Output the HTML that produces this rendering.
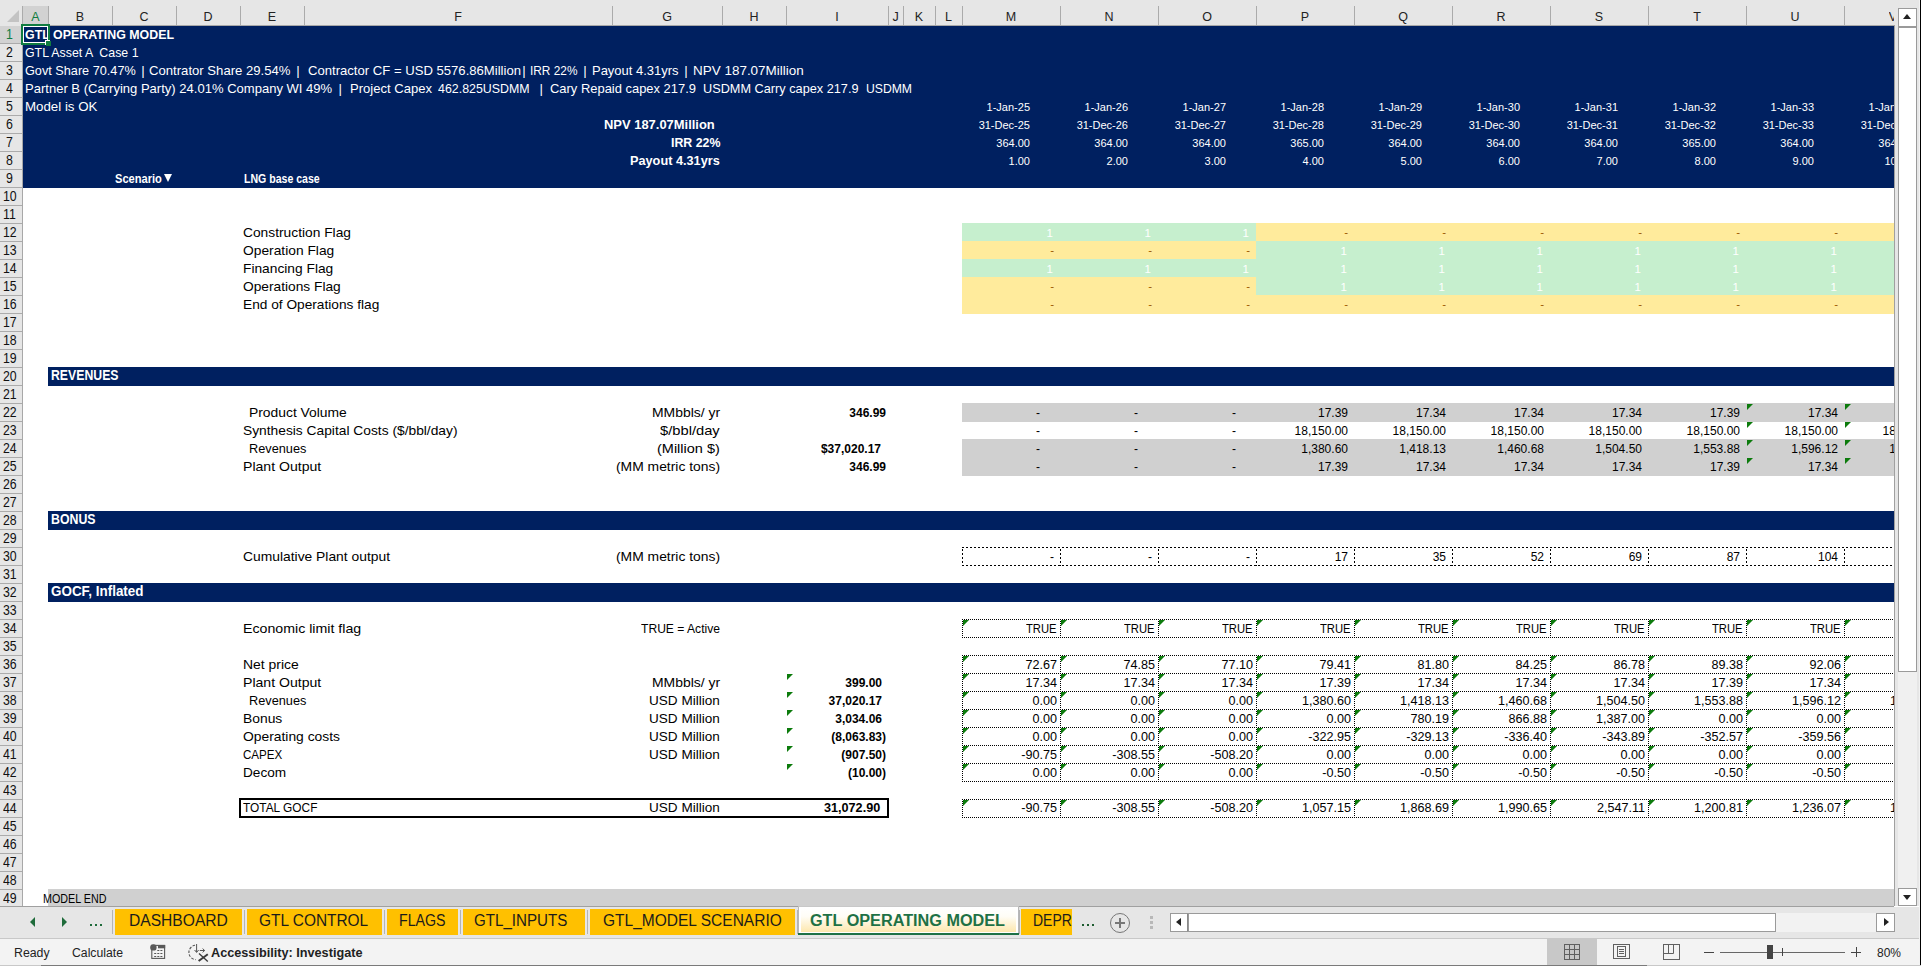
<!DOCTYPE html>
<html><head><meta charset="utf-8"><style>
html,body{margin:0;padding:0;}
body{width:1921px;height:966px;overflow:hidden;position:relative;background:#fff;font-family:"Liberation Sans",sans-serif;}
.t{position:absolute;white-space:pre;font-family:"Liberation Sans",sans-serif;}
</style></head><body>
<div style="position:absolute;left:0px;top:0px;width:1921px;height:966px;background:#ffffff;"></div>
<div style="position:absolute;left:23px;top:25px;width:1871px;height:163px;background:#002060;"></div>
<div style="position:absolute;left:48px;top:367px;width:1846px;height:19px;background:#002060;"></div>
<div style="position:absolute;left:48px;top:511px;width:1846px;height:19px;background:#002060;"></div>
<div style="position:absolute;left:48px;top:583px;width:1846px;height:19px;background:#002060;"></div>
<div style="position:absolute;left:962px;top:223px;width:98px;height:18px;background:#c6efce;"></div>
<div style="position:absolute;left:1060px;top:223px;width:98px;height:18px;background:#c6efce;"></div>
<div style="position:absolute;left:1158px;top:223px;width:98px;height:18px;background:#c6efce;"></div>
<div style="position:absolute;left:1256px;top:223px;width:98px;height:18px;background:#ffeb9c;"></div>
<div style="position:absolute;left:1354px;top:223px;width:98px;height:18px;background:#ffeb9c;"></div>
<div style="position:absolute;left:1452px;top:223px;width:98px;height:18px;background:#ffeb9c;"></div>
<div style="position:absolute;left:1550px;top:223px;width:98px;height:18px;background:#ffeb9c;"></div>
<div style="position:absolute;left:1648px;top:223px;width:98px;height:18px;background:#ffeb9c;"></div>
<div style="position:absolute;left:1746px;top:223px;width:98px;height:18px;background:#ffeb9c;"></div>
<div style="position:absolute;left:1844px;top:223px;width:50px;height:18px;background:#ffeb9c;"></div>
<div style="position:absolute;left:962px;top:241px;width:98px;height:18px;background:#ffeb9c;"></div>
<div style="position:absolute;left:1060px;top:241px;width:98px;height:18px;background:#ffeb9c;"></div>
<div style="position:absolute;left:1158px;top:241px;width:98px;height:18px;background:#ffeb9c;"></div>
<div style="position:absolute;left:1256px;top:241px;width:98px;height:18px;background:#c6efce;"></div>
<div style="position:absolute;left:1354px;top:241px;width:98px;height:18px;background:#c6efce;"></div>
<div style="position:absolute;left:1452px;top:241px;width:98px;height:18px;background:#c6efce;"></div>
<div style="position:absolute;left:1550px;top:241px;width:98px;height:18px;background:#c6efce;"></div>
<div style="position:absolute;left:1648px;top:241px;width:98px;height:18px;background:#c6efce;"></div>
<div style="position:absolute;left:1746px;top:241px;width:98px;height:18px;background:#c6efce;"></div>
<div style="position:absolute;left:1844px;top:241px;width:50px;height:18px;background:#c6efce;"></div>
<div style="position:absolute;left:962px;top:259px;width:98px;height:18px;background:#c6efce;"></div>
<div style="position:absolute;left:1060px;top:259px;width:98px;height:18px;background:#c6efce;"></div>
<div style="position:absolute;left:1158px;top:259px;width:98px;height:18px;background:#c6efce;"></div>
<div style="position:absolute;left:1256px;top:259px;width:98px;height:18px;background:#c6efce;"></div>
<div style="position:absolute;left:1354px;top:259px;width:98px;height:18px;background:#c6efce;"></div>
<div style="position:absolute;left:1452px;top:259px;width:98px;height:18px;background:#c6efce;"></div>
<div style="position:absolute;left:1550px;top:259px;width:98px;height:18px;background:#c6efce;"></div>
<div style="position:absolute;left:1648px;top:259px;width:98px;height:18px;background:#c6efce;"></div>
<div style="position:absolute;left:1746px;top:259px;width:98px;height:18px;background:#c6efce;"></div>
<div style="position:absolute;left:1844px;top:259px;width:50px;height:18px;background:#c6efce;"></div>
<div style="position:absolute;left:962px;top:277px;width:98px;height:18px;background:#ffeb9c;"></div>
<div style="position:absolute;left:1060px;top:277px;width:98px;height:18px;background:#ffeb9c;"></div>
<div style="position:absolute;left:1158px;top:277px;width:98px;height:18px;background:#ffeb9c;"></div>
<div style="position:absolute;left:1256px;top:277px;width:98px;height:18px;background:#c6efce;"></div>
<div style="position:absolute;left:1354px;top:277px;width:98px;height:18px;background:#c6efce;"></div>
<div style="position:absolute;left:1452px;top:277px;width:98px;height:18px;background:#c6efce;"></div>
<div style="position:absolute;left:1550px;top:277px;width:98px;height:18px;background:#c6efce;"></div>
<div style="position:absolute;left:1648px;top:277px;width:98px;height:18px;background:#c6efce;"></div>
<div style="position:absolute;left:1746px;top:277px;width:98px;height:18px;background:#c6efce;"></div>
<div style="position:absolute;left:1844px;top:277px;width:50px;height:18px;background:#c6efce;"></div>
<div style="position:absolute;left:962px;top:295px;width:98px;height:19px;background:#ffeb9c;"></div>
<div style="position:absolute;left:1060px;top:295px;width:98px;height:19px;background:#ffeb9c;"></div>
<div style="position:absolute;left:1158px;top:295px;width:98px;height:19px;background:#ffeb9c;"></div>
<div style="position:absolute;left:1256px;top:295px;width:98px;height:19px;background:#ffeb9c;"></div>
<div style="position:absolute;left:1354px;top:295px;width:98px;height:19px;background:#ffeb9c;"></div>
<div style="position:absolute;left:1452px;top:295px;width:98px;height:19px;background:#ffeb9c;"></div>
<div style="position:absolute;left:1550px;top:295px;width:98px;height:19px;background:#ffeb9c;"></div>
<div style="position:absolute;left:1648px;top:295px;width:98px;height:19px;background:#ffeb9c;"></div>
<div style="position:absolute;left:1746px;top:295px;width:98px;height:19px;background:#ffeb9c;"></div>
<div style="position:absolute;left:1844px;top:295px;width:50px;height:19px;background:#ffeb9c;"></div>
<div style="position:absolute;left:962px;top:403px;width:932px;height:19px;background:#d0d0d0;"></div>
<div style="position:absolute;left:962px;top:439px;width:932px;height:19px;background:#d0d0d0;"></div>
<div style="position:absolute;left:962px;top:457px;width:932px;height:19px;background:#d0d0d0;"></div>
<div style="position:absolute;left:48px;top:889px;width:1846px;height:17px;background:#d0d0d0;"></div>
<span class="t" style="left:25.00px;top:28px;font-size:13px;line-height:13px;font-weight:700;color:#ffffff;transform:scaleX(0.9536);transform-origin:0 0;">GTL OPERATING MODEL</span>
<span class="t" style="left:25.00px;top:46px;font-size:13.3px;line-height:13.3px;font-weight:400;color:#ffffff;transform:scaleX(0.9288);transform-origin:0 0;">GTL Asset A  Case 1</span>
<span class="t" style="left:25.00px;top:64px;font-size:13.3px;line-height:13.3px;font-weight:400;color:#ffffff;transform:scaleX(0.9542);transform-origin:0 0;">Govt Share 70.47%</span>
<span class="t" style="left:141.27px;top:64px;font-size:13.3px;line-height:13.3px;font-weight:400;color:#ffffff;">|</span>
<span class="t" style="left:149.25px;top:64px;font-size:13.3px;line-height:13.3px;font-weight:400;color:#ffffff;transform:scaleX(0.9867);transform-origin:0 0;">Contrator Share 29.54%</span>
<span class="t" style="left:296.27px;top:64px;font-size:13.3px;line-height:13.3px;font-weight:400;color:#ffffff;">|</span>
<span class="t" style="left:307.50px;top:64px;font-size:13.3px;line-height:13.3px;font-weight:400;color:#ffffff;transform:scaleX(0.9853);transform-origin:0 0;">Contractor CF = USD 5576.86Million</span>
<span class="t" style="left:522.27px;top:64px;font-size:13.3px;line-height:13.3px;font-weight:400;color:#ffffff;">|</span>
<span class="t" style="left:530.00px;top:64px;font-size:13.3px;line-height:13.3px;font-weight:400;color:#ffffff;transform:scaleX(0.8925);transform-origin:0 0;">IRR 22%</span>
<span class="t" style="left:583.27px;top:64px;font-size:13.3px;line-height:13.3px;font-weight:400;color:#ffffff;">|</span>
<span class="t" style="left:591.75px;top:64px;font-size:13.3px;line-height:13.3px;font-weight:400;color:#ffffff;transform:scaleX(0.9752);transform-origin:0 0;">Payout 4.31yrs</span>
<span class="t" style="left:684.27px;top:64px;font-size:13.3px;line-height:13.3px;font-weight:400;color:#ffffff;">|</span>
<span class="t" style="left:692.50px;top:64px;font-size:13.3px;line-height:13.3px;font-weight:400;color:#ffffff;transform:scaleX(1.0124);transform-origin:0 0;">NPV 187.07Million</span>
<span class="t" style="left:25.00px;top:82px;font-size:13.3px;line-height:13.3px;font-weight:400;color:#ffffff;transform:scaleX(0.9804);transform-origin:0 0;">Partner B (Carrying Party) 24.01% Company WI 49%</span>
<span class="t" style="left:338.47px;top:82px;font-size:13.3px;line-height:13.3px;font-weight:400;color:#ffffff;">|</span>
<span class="t" style="left:350.00px;top:82px;font-size:13.3px;line-height:13.3px;font-weight:400;color:#ffffff;transform:scaleX(0.9819);transform-origin:0 0;">Project Capex</span>
<span class="t" style="left:438.30px;top:82px;font-size:13.3px;line-height:13.3px;font-weight:400;color:#ffffff;transform:scaleX(0.9329);transform-origin:0 0;">462.825USDMM</span>
<span class="t" style="left:539.57px;top:82px;font-size:13.3px;line-height:13.3px;font-weight:400;color:#ffffff;">|</span>
<span class="t" style="left:550.00px;top:82px;font-size:13.3px;line-height:13.3px;font-weight:400;color:#ffffff;transform:scaleX(0.9729);transform-origin:0 0;">Cary Repaid capex 217.9</span>
<span class="t" style="left:703.25px;top:82px;font-size:13.3px;line-height:13.3px;font-weight:400;color:#ffffff;transform:scaleX(0.9565);transform-origin:0 0;">USDMM Carry capex 217.9</span>
<span class="t" style="left:865.75px;top:82px;font-size:13.3px;line-height:13.3px;font-weight:400;color:#ffffff;transform:scaleX(0.9157);transform-origin:0 0;">USDMM</span>
<span class="t" style="left:25.00px;top:100px;font-size:13.3px;line-height:13.3px;font-weight:400;color:#ffffff;">Model is OK</span>
<span class="t" style="left:604.25px;top:118px;font-size:13.5px;line-height:13.5px;font-weight:700;color:#ffffff;transform:scaleX(0.9585);transform-origin:0 0;">NPV 187.07Million</span>
<span class="t" style="left:670.50px;top:136px;font-size:13.5px;line-height:13.5px;font-weight:700;color:#ffffff;transform:scaleX(0.9161);transform-origin:0 0;">IRR 22%</span>
<span class="t" style="left:630.25px;top:154px;font-size:13.5px;line-height:13.5px;font-weight:700;color:#ffffff;transform:scaleX(0.9416);transform-origin:0 0;">Payout 4.31yrs</span>
<span class="t" style="left:115.00px;top:173px;font-size:12px;line-height:12px;font-weight:700;color:#ffffff;transform:scaleX(0.9250);transform-origin:0 0;">Scenario</span>
<div style="position:absolute;left:163.8px;top:174.2px;width:0;height:0;border-left:4.6px solid transparent;border-right:4.6px solid transparent;border-top:8.7px solid #fff"></div>
<span class="t" style="left:243.50px;top:173px;font-size:12px;line-height:12px;font-weight:700;color:#ffffff;transform:scaleX(0.8803);transform-origin:0 0;">LNG base case</span>
<span class="t" style="left:986.58px;top:102px;font-size:11px;line-height:11px;font-weight:400;color:#ffffff;">1-Jan-25</span>
<span class="t" style="left:978.64px;top:120px;font-size:11px;line-height:11px;font-weight:400;color:#ffffff;">31-Dec-25</span>
<span class="t" style="left:996.34px;top:138px;font-size:11px;line-height:11px;font-weight:400;color:#ffffff;">364.00</span>
<span class="t" style="left:1008.58px;top:156px;font-size:11px;line-height:11px;font-weight:400;color:#ffffff;">1.00</span>
<span class="t" style="left:1084.58px;top:102px;font-size:11px;line-height:11px;font-weight:400;color:#ffffff;">1-Jan-26</span>
<span class="t" style="left:1076.64px;top:120px;font-size:11px;line-height:11px;font-weight:400;color:#ffffff;">31-Dec-26</span>
<span class="t" style="left:1094.34px;top:138px;font-size:11px;line-height:11px;font-weight:400;color:#ffffff;">364.00</span>
<span class="t" style="left:1106.58px;top:156px;font-size:11px;line-height:11px;font-weight:400;color:#ffffff;">2.00</span>
<span class="t" style="left:1182.58px;top:102px;font-size:11px;line-height:11px;font-weight:400;color:#ffffff;">1-Jan-27</span>
<span class="t" style="left:1174.64px;top:120px;font-size:11px;line-height:11px;font-weight:400;color:#ffffff;">31-Dec-27</span>
<span class="t" style="left:1192.34px;top:138px;font-size:11px;line-height:11px;font-weight:400;color:#ffffff;">364.00</span>
<span class="t" style="left:1204.58px;top:156px;font-size:11px;line-height:11px;font-weight:400;color:#ffffff;">3.00</span>
<span class="t" style="left:1280.58px;top:102px;font-size:11px;line-height:11px;font-weight:400;color:#ffffff;">1-Jan-28</span>
<span class="t" style="left:1272.64px;top:120px;font-size:11px;line-height:11px;font-weight:400;color:#ffffff;">31-Dec-28</span>
<span class="t" style="left:1290.34px;top:138px;font-size:11px;line-height:11px;font-weight:400;color:#ffffff;">365.00</span>
<span class="t" style="left:1302.58px;top:156px;font-size:11px;line-height:11px;font-weight:400;color:#ffffff;">4.00</span>
<span class="t" style="left:1378.58px;top:102px;font-size:11px;line-height:11px;font-weight:400;color:#ffffff;">1-Jan-29</span>
<span class="t" style="left:1370.64px;top:120px;font-size:11px;line-height:11px;font-weight:400;color:#ffffff;">31-Dec-29</span>
<span class="t" style="left:1388.34px;top:138px;font-size:11px;line-height:11px;font-weight:400;color:#ffffff;">364.00</span>
<span class="t" style="left:1400.58px;top:156px;font-size:11px;line-height:11px;font-weight:400;color:#ffffff;">5.00</span>
<span class="t" style="left:1476.58px;top:102px;font-size:11px;line-height:11px;font-weight:400;color:#ffffff;">1-Jan-30</span>
<span class="t" style="left:1468.64px;top:120px;font-size:11px;line-height:11px;font-weight:400;color:#ffffff;">31-Dec-30</span>
<span class="t" style="left:1486.34px;top:138px;font-size:11px;line-height:11px;font-weight:400;color:#ffffff;">364.00</span>
<span class="t" style="left:1498.58px;top:156px;font-size:11px;line-height:11px;font-weight:400;color:#ffffff;">6.00</span>
<span class="t" style="left:1574.58px;top:102px;font-size:11px;line-height:11px;font-weight:400;color:#ffffff;">1-Jan-31</span>
<span class="t" style="left:1566.64px;top:120px;font-size:11px;line-height:11px;font-weight:400;color:#ffffff;">31-Dec-31</span>
<span class="t" style="left:1584.34px;top:138px;font-size:11px;line-height:11px;font-weight:400;color:#ffffff;">364.00</span>
<span class="t" style="left:1596.58px;top:156px;font-size:11px;line-height:11px;font-weight:400;color:#ffffff;">7.00</span>
<span class="t" style="left:1672.58px;top:102px;font-size:11px;line-height:11px;font-weight:400;color:#ffffff;">1-Jan-32</span>
<span class="t" style="left:1664.64px;top:120px;font-size:11px;line-height:11px;font-weight:400;color:#ffffff;">31-Dec-32</span>
<span class="t" style="left:1682.34px;top:138px;font-size:11px;line-height:11px;font-weight:400;color:#ffffff;">365.00</span>
<span class="t" style="left:1694.58px;top:156px;font-size:11px;line-height:11px;font-weight:400;color:#ffffff;">8.00</span>
<span class="t" style="left:1770.58px;top:102px;font-size:11px;line-height:11px;font-weight:400;color:#ffffff;">1-Jan-33</span>
<span class="t" style="left:1762.64px;top:120px;font-size:11px;line-height:11px;font-weight:400;color:#ffffff;">31-Dec-33</span>
<span class="t" style="left:1780.34px;top:138px;font-size:11px;line-height:11px;font-weight:400;color:#ffffff;">364.00</span>
<span class="t" style="left:1792.58px;top:156px;font-size:11px;line-height:11px;font-weight:400;color:#ffffff;">9.00</span>
<div style="position:absolute;left:1868.58px;top:100px;width:25.42px;height:19px;overflow:hidden"><span class="t" style="left:0;top:2px;font-size:11px;line-height:11px;font-weight:400;color:#ffffff;">1-Jan-34</span></div>
<div style="position:absolute;left:1860.64px;top:118px;width:33.36px;height:19px;overflow:hidden"><span class="t" style="left:0;top:2px;font-size:11px;line-height:11px;font-weight:400;color:#ffffff;">31-Dec-34</span></div>
<div style="position:absolute;left:1878.34px;top:136px;width:15.66px;height:19px;overflow:hidden"><span class="t" style="left:0;top:2px;font-size:11px;line-height:11px;font-weight:400;color:#ffffff;">364.00</span></div>
<div style="position:absolute;left:1884.47px;top:154px;width:9.53px;height:19px;overflow:hidden"><span class="t" style="left:0;top:2px;font-size:11px;line-height:11px;font-weight:400;color:#ffffff;">10.00</span></div>
<span class="t" style="left:243.00px;top:226px;font-size:13.5px;line-height:13.5px;font-weight:400;color:#000000;transform:scaleX(1.0207);transform-origin:0 0;">Construction Flag</span>
<span class="t" style="left:243.00px;top:244px;font-size:13.5px;line-height:13.5px;font-weight:400;color:#000000;transform:scaleX(1.0217);transform-origin:0 0;">Operation Flag</span>
<span class="t" style="left:243.00px;top:262px;font-size:13.5px;line-height:13.5px;font-weight:400;color:#000000;transform:scaleX(1.0191);transform-origin:0 0;">Financing Flag</span>
<span class="t" style="left:243.00px;top:280px;font-size:13.5px;line-height:13.5px;font-weight:400;color:#000000;transform:scaleX(1.0176);transform-origin:0 0;">Operations Flag</span>
<span class="t" style="left:243.00px;top:298px;font-size:13.5px;line-height:13.5px;font-weight:400;color:#000000;transform:scaleX(1.0142);transform-origin:0 0;">End of Operations flag</span>
<span class="t" style="left:249.00px;top:406px;font-size:13.5px;line-height:13.5px;font-weight:400;color:#000000;transform:scaleX(1.0261);transform-origin:0 0;">Product Volume</span>
<span class="t" style="left:243.00px;top:424px;font-size:13.5px;line-height:13.5px;font-weight:400;color:#000000;transform:scaleX(1.0210);transform-origin:0 0;">Synthesis Capital Costs ($/bbl/day)</span>
<span class="t" style="left:249.00px;top:442px;font-size:13.5px;line-height:13.5px;font-weight:400;color:#000000;transform:scaleX(0.9441);transform-origin:0 0;">Revenues</span>
<span class="t" style="left:243.00px;top:460px;font-size:13.5px;line-height:13.5px;font-weight:400;color:#000000;transform:scaleX(1.0418);transform-origin:0 0;">Plant Output</span>
<span class="t" style="left:243.00px;top:550px;font-size:13.5px;line-height:13.5px;font-weight:400;color:#000000;transform:scaleX(1.0255);transform-origin:0 0;">Cumulative Plant output</span>
<span class="t" style="left:243.00px;top:622px;font-size:13.5px;line-height:13.5px;font-weight:400;color:#000000;transform:scaleX(1.0507);transform-origin:0 0;">Economic limit flag</span>
<span class="t" style="left:243.00px;top:658px;font-size:13.5px;line-height:13.5px;font-weight:400;color:#000000;transform:scaleX(1.0327);transform-origin:0 0;">Net price</span>
<span class="t" style="left:243.00px;top:676px;font-size:13.5px;line-height:13.5px;font-weight:400;color:#000000;transform:scaleX(1.0418);transform-origin:0 0;">Plant Output</span>
<span class="t" style="left:249.00px;top:694px;font-size:13.5px;line-height:13.5px;font-weight:400;color:#000000;transform:scaleX(0.9441);transform-origin:0 0;">Revenues</span>
<span class="t" style="left:243.00px;top:712px;font-size:13.5px;line-height:13.5px;font-weight:400;color:#000000;transform:scaleX(1.0266);transform-origin:0 0;">Bonus</span>
<span class="t" style="left:243.00px;top:730px;font-size:13.5px;line-height:13.5px;font-weight:400;color:#000000;transform:scaleX(1.0259);transform-origin:0 0;">Operating costs</span>
<span class="t" style="left:243.00px;top:748px;font-size:13.5px;line-height:13.5px;font-weight:400;color:#000000;transform:scaleX(0.8584);transform-origin:0 0;">CAPEX</span>
<span class="t" style="left:243.00px;top:766px;font-size:13.5px;line-height:13.5px;font-weight:400;color:#000000;transform:scaleX(1.0078);transform-origin:0 0;">Decom</span>
<span class="t" style="left:243.00px;top:801px;font-size:13.5px;line-height:13.5px;font-weight:400;color:#000000;transform:scaleX(0.8803);transform-origin:0 0;">TOTAL GOCF</span>
<span class="t" style="left:651.80px;top:406px;font-size:13.5px;line-height:13.5px;font-weight:400;color:#000000;transform:scaleX(1.0331);transform-origin:0 0;">MMbbls/ yr</span>
<span class="t" style="left:660.30px;top:424px;font-size:13.5px;line-height:13.5px;font-weight:400;color:#000000;transform:scaleX(1.0895);transform-origin:0 0;">$/bbl/day</span>
<span class="t" style="left:657.20px;top:442px;font-size:13.5px;line-height:13.5px;font-weight:400;color:#000000;transform:scaleX(1.0732);transform-origin:0 0;">(Million $)</span>
<span class="t" style="left:616.00px;top:460px;font-size:13.5px;line-height:13.5px;font-weight:400;color:#000000;transform:scaleX(1.0272);transform-origin:0 0;">(MM metric tons)</span>
<span class="t" style="left:616.00px;top:550px;font-size:13.5px;line-height:13.5px;font-weight:400;color:#000000;transform:scaleX(1.0272);transform-origin:0 0;">(MM metric tons)</span>
<span class="t" style="left:641.00px;top:622px;font-size:13.5px;line-height:13.5px;font-weight:400;color:#000000;transform:scaleX(0.8961);transform-origin:0 0;">TRUE = Active</span>
<span class="t" style="left:651.80px;top:676px;font-size:13.5px;line-height:13.5px;font-weight:400;color:#000000;transform:scaleX(1.0331);transform-origin:0 0;">MMbbls/ yr</span>
<span class="t" style="left:649.20px;top:694px;font-size:13.5px;line-height:13.5px;font-weight:400;color:#000000;transform:scaleX(1.0040);transform-origin:0 0;">USD Million</span>
<span class="t" style="left:649.20px;top:712px;font-size:13.5px;line-height:13.5px;font-weight:400;color:#000000;transform:scaleX(1.0040);transform-origin:0 0;">USD Million</span>
<span class="t" style="left:649.20px;top:730px;font-size:13.5px;line-height:13.5px;font-weight:400;color:#000000;transform:scaleX(1.0040);transform-origin:0 0;">USD Million</span>
<span class="t" style="left:649.20px;top:748px;font-size:13.5px;line-height:13.5px;font-weight:400;color:#000000;transform:scaleX(1.0040);transform-origin:0 0;">USD Million</span>
<span class="t" style="left:649.20px;top:801px;font-size:13.5px;line-height:13.5px;font-weight:400;color:#000000;transform:scaleX(1.0040);transform-origin:0 0;">USD Million</span>
<span class="t" style="left:51.00px;top:368px;font-size:14px;line-height:14px;font-weight:700;color:#ffffff;transform:scaleX(0.8763);transform-origin:0 0;">REVENUES</span>
<span class="t" style="left:51.00px;top:512px;font-size:14px;line-height:14px;font-weight:700;color:#ffffff;transform:scaleX(0.8801);transform-origin:0 0;">BONUS</span>
<span class="t" style="left:51.00px;top:584px;font-size:14px;line-height:14px;font-weight:700;color:#ffffff;transform:scaleX(0.9590);transform-origin:0 0;">GOCF, Inflated</span>
<span class="t" style="left:849.30px;top:407px;font-size:12px;line-height:12px;font-weight:700;color:#000;">346.99</span>
<span class="t" style="left:820.94px;top:443px;font-size:12px;line-height:12px;font-weight:700;color:#000;">$37,020.17</span>
<span class="t" style="left:849.30px;top:461px;font-size:12px;line-height:12px;font-weight:700;color:#000;">346.99</span>
<span class="t" style="left:845.30px;top:677px;font-size:12px;line-height:12px;font-weight:700;color:#000;">399.00</span>
<span class="t" style="left:828.61px;top:695px;font-size:12px;line-height:12px;font-weight:700;color:#000;">37,020.17</span>
<span class="t" style="left:835.28px;top:713px;font-size:12px;line-height:12px;font-weight:700;color:#000;">3,034.06</span>
<span class="t" style="left:831.30px;top:731px;font-size:12px;line-height:12px;font-weight:700;color:#000;">(8,063.83)</span>
<span class="t" style="left:841.30px;top:749px;font-size:12px;line-height:12px;font-weight:700;color:#000;">(907.50)</span>
<span class="t" style="left:847.97px;top:767px;font-size:12px;line-height:12px;font-weight:700;color:#000;">(10.00)</span>
<span class="t" style="left:824.00px;top:801px;font-size:13px;line-height:13px;font-weight:700;color:#000;transform:scaleX(0.9716);transform-origin:0 0;">31,072.90</span>
<div style="position:absolute;left:787px;top:674px;width:0;height:0;border-top:6px solid #0c7b0c;border-right:6px solid transparent"></div>
<div style="position:absolute;left:787px;top:692px;width:0;height:0;border-top:6px solid #0c7b0c;border-right:6px solid transparent"></div>
<div style="position:absolute;left:787px;top:710px;width:0;height:0;border-top:6px solid #0c7b0c;border-right:6px solid transparent"></div>
<div style="position:absolute;left:787px;top:728px;width:0;height:0;border-top:6px solid #0c7b0c;border-right:6px solid transparent"></div>
<div style="position:absolute;left:787px;top:746px;width:0;height:0;border-top:6px solid #0c7b0c;border-right:6px solid transparent"></div>
<div style="position:absolute;left:787px;top:764px;width:0;height:0;border-top:6px solid #0c7b0c;border-right:6px solid transparent"></div>
<span class="t" style="left:1046.59px;top:228px;font-size:11.5px;line-height:11.5px;font-weight:400;color:#ffffff;">1</span>
<span class="t" style="left:1144.59px;top:228px;font-size:11.5px;line-height:11.5px;font-weight:400;color:#ffffff;">1</span>
<span class="t" style="left:1242.59px;top:228px;font-size:11.5px;line-height:11.5px;font-weight:400;color:#ffffff;">1</span>
<span class="t" style="left:1344.16px;top:227px;font-size:11.5px;line-height:11.5px;font-weight:400;color:#9c5700;">-</span>
<span class="t" style="left:1442.16px;top:227px;font-size:11.5px;line-height:11.5px;font-weight:400;color:#9c5700;">-</span>
<span class="t" style="left:1540.16px;top:227px;font-size:11.5px;line-height:11.5px;font-weight:400;color:#9c5700;">-</span>
<span class="t" style="left:1638.16px;top:227px;font-size:11.5px;line-height:11.5px;font-weight:400;color:#9c5700;">-</span>
<span class="t" style="left:1736.16px;top:227px;font-size:11.5px;line-height:11.5px;font-weight:400;color:#9c5700;">-</span>
<span class="t" style="left:1834.16px;top:227px;font-size:11.5px;line-height:11.5px;font-weight:400;color:#9c5700;">-</span>
<div style="position:absolute;left:1932.16px;top:225px;width:0.00px;height:19px;overflow:hidden"><span class="t" style="left:0;top:2px;font-size:11.5px;line-height:11.5px;font-weight:400;color:#9c5700;">-</span></div>
<span class="t" style="left:1050.16px;top:245px;font-size:11.5px;line-height:11.5px;font-weight:400;color:#9c5700;">-</span>
<span class="t" style="left:1148.16px;top:245px;font-size:11.5px;line-height:11.5px;font-weight:400;color:#9c5700;">-</span>
<span class="t" style="left:1246.16px;top:245px;font-size:11.5px;line-height:11.5px;font-weight:400;color:#9c5700;">-</span>
<span class="t" style="left:1340.59px;top:246px;font-size:11.5px;line-height:11.5px;font-weight:400;color:#ffffff;">1</span>
<span class="t" style="left:1438.59px;top:246px;font-size:11.5px;line-height:11.5px;font-weight:400;color:#ffffff;">1</span>
<span class="t" style="left:1536.59px;top:246px;font-size:11.5px;line-height:11.5px;font-weight:400;color:#ffffff;">1</span>
<span class="t" style="left:1634.59px;top:246px;font-size:11.5px;line-height:11.5px;font-weight:400;color:#ffffff;">1</span>
<span class="t" style="left:1732.59px;top:246px;font-size:11.5px;line-height:11.5px;font-weight:400;color:#ffffff;">1</span>
<span class="t" style="left:1830.59px;top:246px;font-size:11.5px;line-height:11.5px;font-weight:400;color:#ffffff;">1</span>
<div style="position:absolute;left:1928.59px;top:244px;width:0.00px;height:19px;overflow:hidden"><span class="t" style="left:0;top:2px;font-size:11.5px;line-height:11.5px;font-weight:400;color:#ffffff;">1</span></div>
<span class="t" style="left:1046.59px;top:264px;font-size:11.5px;line-height:11.5px;font-weight:400;color:#ffffff;">1</span>
<span class="t" style="left:1144.59px;top:264px;font-size:11.5px;line-height:11.5px;font-weight:400;color:#ffffff;">1</span>
<span class="t" style="left:1242.59px;top:264px;font-size:11.5px;line-height:11.5px;font-weight:400;color:#ffffff;">1</span>
<span class="t" style="left:1340.59px;top:264px;font-size:11.5px;line-height:11.5px;font-weight:400;color:#ffffff;">1</span>
<span class="t" style="left:1438.59px;top:264px;font-size:11.5px;line-height:11.5px;font-weight:400;color:#ffffff;">1</span>
<span class="t" style="left:1536.59px;top:264px;font-size:11.5px;line-height:11.5px;font-weight:400;color:#ffffff;">1</span>
<span class="t" style="left:1634.59px;top:264px;font-size:11.5px;line-height:11.5px;font-weight:400;color:#ffffff;">1</span>
<span class="t" style="left:1732.59px;top:264px;font-size:11.5px;line-height:11.5px;font-weight:400;color:#ffffff;">1</span>
<span class="t" style="left:1830.59px;top:264px;font-size:11.5px;line-height:11.5px;font-weight:400;color:#ffffff;">1</span>
<div style="position:absolute;left:1928.59px;top:262px;width:0.00px;height:19px;overflow:hidden"><span class="t" style="left:0;top:2px;font-size:11.5px;line-height:11.5px;font-weight:400;color:#ffffff;">1</span></div>
<span class="t" style="left:1050.16px;top:281px;font-size:11.5px;line-height:11.5px;font-weight:400;color:#9c5700;">-</span>
<span class="t" style="left:1148.16px;top:281px;font-size:11.5px;line-height:11.5px;font-weight:400;color:#9c5700;">-</span>
<span class="t" style="left:1246.16px;top:281px;font-size:11.5px;line-height:11.5px;font-weight:400;color:#9c5700;">-</span>
<span class="t" style="left:1340.59px;top:282px;font-size:11.5px;line-height:11.5px;font-weight:400;color:#ffffff;">1</span>
<span class="t" style="left:1438.59px;top:282px;font-size:11.5px;line-height:11.5px;font-weight:400;color:#ffffff;">1</span>
<span class="t" style="left:1536.59px;top:282px;font-size:11.5px;line-height:11.5px;font-weight:400;color:#ffffff;">1</span>
<span class="t" style="left:1634.59px;top:282px;font-size:11.5px;line-height:11.5px;font-weight:400;color:#ffffff;">1</span>
<span class="t" style="left:1732.59px;top:282px;font-size:11.5px;line-height:11.5px;font-weight:400;color:#ffffff;">1</span>
<span class="t" style="left:1830.59px;top:282px;font-size:11.5px;line-height:11.5px;font-weight:400;color:#ffffff;">1</span>
<div style="position:absolute;left:1928.59px;top:280px;width:0.00px;height:19px;overflow:hidden"><span class="t" style="left:0;top:2px;font-size:11.5px;line-height:11.5px;font-weight:400;color:#ffffff;">1</span></div>
<span class="t" style="left:1050.16px;top:299px;font-size:11.5px;line-height:11.5px;font-weight:400;color:#9c5700;">-</span>
<span class="t" style="left:1148.16px;top:299px;font-size:11.5px;line-height:11.5px;font-weight:400;color:#9c5700;">-</span>
<span class="t" style="left:1246.16px;top:299px;font-size:11.5px;line-height:11.5px;font-weight:400;color:#9c5700;">-</span>
<span class="t" style="left:1344.16px;top:299px;font-size:11.5px;line-height:11.5px;font-weight:400;color:#9c5700;">-</span>
<span class="t" style="left:1442.16px;top:299px;font-size:11.5px;line-height:11.5px;font-weight:400;color:#9c5700;">-</span>
<span class="t" style="left:1540.16px;top:299px;font-size:11.5px;line-height:11.5px;font-weight:400;color:#9c5700;">-</span>
<span class="t" style="left:1638.16px;top:299px;font-size:11.5px;line-height:11.5px;font-weight:400;color:#9c5700;">-</span>
<span class="t" style="left:1736.16px;top:299px;font-size:11.5px;line-height:11.5px;font-weight:400;color:#9c5700;">-</span>
<span class="t" style="left:1834.16px;top:299px;font-size:11.5px;line-height:11.5px;font-weight:400;color:#9c5700;">-</span>
<div style="position:absolute;left:1932.16px;top:297px;width:0.00px;height:19px;overflow:hidden"><span class="t" style="left:0;top:2px;font-size:11.5px;line-height:11.5px;font-weight:400;color:#9c5700;">-</span></div>
<span class="t" style="left:1036.00px;top:407px;font-size:12px;line-height:12px;font-weight:400;color:#000;">-</span>
<span class="t" style="left:1134.00px;top:407px;font-size:12px;line-height:12px;font-weight:400;color:#000;">-</span>
<span class="t" style="left:1232.00px;top:407px;font-size:12px;line-height:12px;font-weight:400;color:#000;">-</span>
<span class="t" style="left:1317.97px;top:407px;font-size:12px;line-height:12px;font-weight:400;color:#000;">17.39</span>
<span class="t" style="left:1415.97px;top:407px;font-size:12px;line-height:12px;font-weight:400;color:#000;">17.34</span>
<span class="t" style="left:1513.97px;top:407px;font-size:12px;line-height:12px;font-weight:400;color:#000;">17.34</span>
<span class="t" style="left:1611.97px;top:407px;font-size:12px;line-height:12px;font-weight:400;color:#000;">17.34</span>
<span class="t" style="left:1709.97px;top:407px;font-size:12px;line-height:12px;font-weight:400;color:#000;">17.39</span>
<span class="t" style="left:1807.97px;top:407px;font-size:12px;line-height:12px;font-weight:400;color:#000;">17.34</span>
<div style="position:absolute;left:1905.97px;top:405px;width:0.00px;height:20px;overflow:hidden"><span class="t" style="left:0;top:2px;font-size:12px;line-height:12px;font-weight:400;color:#000;">17.34</span></div>
<span class="t" style="left:1036.00px;top:425px;font-size:12px;line-height:12px;font-weight:400;color:#000;">-</span>
<span class="t" style="left:1134.00px;top:425px;font-size:12px;line-height:12px;font-weight:400;color:#000;">-</span>
<span class="t" style="left:1232.00px;top:425px;font-size:12px;line-height:12px;font-weight:400;color:#000;">-</span>
<span class="t" style="left:1294.61px;top:425px;font-size:12px;line-height:12px;font-weight:400;color:#000;">18,150.00</span>
<span class="t" style="left:1392.61px;top:425px;font-size:12px;line-height:12px;font-weight:400;color:#000;">18,150.00</span>
<span class="t" style="left:1490.61px;top:425px;font-size:12px;line-height:12px;font-weight:400;color:#000;">18,150.00</span>
<span class="t" style="left:1588.61px;top:425px;font-size:12px;line-height:12px;font-weight:400;color:#000;">18,150.00</span>
<span class="t" style="left:1686.61px;top:425px;font-size:12px;line-height:12px;font-weight:400;color:#000;">18,150.00</span>
<span class="t" style="left:1784.61px;top:425px;font-size:12px;line-height:12px;font-weight:400;color:#000;">18,150.00</span>
<div style="position:absolute;left:1882.61px;top:423px;width:11.39px;height:20px;overflow:hidden"><span class="t" style="left:0;top:2px;font-size:12px;line-height:12px;font-weight:400;color:#000;">18,150.00</span></div>
<span class="t" style="left:1036.00px;top:443px;font-size:12px;line-height:12px;font-weight:400;color:#000;">-</span>
<span class="t" style="left:1134.00px;top:443px;font-size:12px;line-height:12px;font-weight:400;color:#000;">-</span>
<span class="t" style="left:1232.00px;top:443px;font-size:12px;line-height:12px;font-weight:400;color:#000;">-</span>
<span class="t" style="left:1301.28px;top:443px;font-size:12px;line-height:12px;font-weight:400;color:#000;">1,380.60</span>
<span class="t" style="left:1399.28px;top:443px;font-size:12px;line-height:12px;font-weight:400;color:#000;">1,418.13</span>
<span class="t" style="left:1497.28px;top:443px;font-size:12px;line-height:12px;font-weight:400;color:#000;">1,460.68</span>
<span class="t" style="left:1595.28px;top:443px;font-size:12px;line-height:12px;font-weight:400;color:#000;">1,504.50</span>
<span class="t" style="left:1693.28px;top:443px;font-size:12px;line-height:12px;font-weight:400;color:#000;">1,553.88</span>
<span class="t" style="left:1791.28px;top:443px;font-size:12px;line-height:12px;font-weight:400;color:#000;">1,596.12</span>
<div style="position:absolute;left:1889.28px;top:441px;width:4.72px;height:20px;overflow:hidden"><span class="t" style="left:0;top:2px;font-size:12px;line-height:12px;font-weight:400;color:#000;">1,640.23</span></div>
<span class="t" style="left:1036.00px;top:461px;font-size:12px;line-height:12px;font-weight:400;color:#000;">-</span>
<span class="t" style="left:1134.00px;top:461px;font-size:12px;line-height:12px;font-weight:400;color:#000;">-</span>
<span class="t" style="left:1232.00px;top:461px;font-size:12px;line-height:12px;font-weight:400;color:#000;">-</span>
<span class="t" style="left:1317.97px;top:461px;font-size:12px;line-height:12px;font-weight:400;color:#000;">17.39</span>
<span class="t" style="left:1415.97px;top:461px;font-size:12px;line-height:12px;font-weight:400;color:#000;">17.34</span>
<span class="t" style="left:1513.97px;top:461px;font-size:12px;line-height:12px;font-weight:400;color:#000;">17.34</span>
<span class="t" style="left:1611.97px;top:461px;font-size:12px;line-height:12px;font-weight:400;color:#000;">17.34</span>
<span class="t" style="left:1709.97px;top:461px;font-size:12px;line-height:12px;font-weight:400;color:#000;">17.39</span>
<span class="t" style="left:1807.97px;top:461px;font-size:12px;line-height:12px;font-weight:400;color:#000;">17.34</span>
<div style="position:absolute;left:1905.97px;top:459px;width:0.00px;height:20px;overflow:hidden"><span class="t" style="left:0;top:2px;font-size:12px;line-height:12px;font-weight:400;color:#000;">17.34</span></div>
<div style="position:absolute;left:1747px;top:404px;width:0;height:0;border-top:6px solid #0c7b0c;border-right:6px solid transparent"></div>
<div style="position:absolute;left:1845px;top:404px;width:0;height:0;border-top:6px solid #0c7b0c;border-right:6px solid transparent"></div>
<div style="position:absolute;left:1747px;top:422px;width:0;height:0;border-top:6px solid #0c7b0c;border-right:6px solid transparent"></div>
<div style="position:absolute;left:1845px;top:422px;width:0;height:0;border-top:6px solid #0c7b0c;border-right:6px solid transparent"></div>
<div style="position:absolute;left:1747px;top:440px;width:0;height:0;border-top:6px solid #0c7b0c;border-right:6px solid transparent"></div>
<div style="position:absolute;left:1845px;top:440px;width:0;height:0;border-top:6px solid #0c7b0c;border-right:6px solid transparent"></div>
<div style="position:absolute;left:1747px;top:458px;width:0;height:0;border-top:6px solid #0c7b0c;border-right:6px solid transparent"></div>
<div style="position:absolute;left:1845px;top:458px;width:0;height:0;border-top:6px solid #0c7b0c;border-right:6px solid transparent"></div>
<div style="position:absolute;left:962px;top:547px;width:932px;height:1px;background:repeating-linear-gradient(90deg,#000 0 2px,transparent 2px 4px)"></div>
<div style="position:absolute;left:962px;top:565px;width:932px;height:1px;background:repeating-linear-gradient(90deg,#000 0 2px,transparent 2px 4px)"></div>
<div style="position:absolute;left:962px;top:549px;width:1px;height:17px;background:repeating-linear-gradient(180deg,#000 0 2px,transparent 2px 4px)"></div>
<div style="position:absolute;left:1060px;top:549px;width:1px;height:17px;background:repeating-linear-gradient(180deg,#000 0 2px,transparent 2px 4px)"></div>
<div style="position:absolute;left:1158px;top:549px;width:1px;height:17px;background:repeating-linear-gradient(180deg,#000 0 2px,transparent 2px 4px)"></div>
<div style="position:absolute;left:1256px;top:549px;width:1px;height:17px;background:repeating-linear-gradient(180deg,#000 0 2px,transparent 2px 4px)"></div>
<div style="position:absolute;left:1354px;top:549px;width:1px;height:17px;background:repeating-linear-gradient(180deg,#000 0 2px,transparent 2px 4px)"></div>
<div style="position:absolute;left:1452px;top:549px;width:1px;height:17px;background:repeating-linear-gradient(180deg,#000 0 2px,transparent 2px 4px)"></div>
<div style="position:absolute;left:1550px;top:549px;width:1px;height:17px;background:repeating-linear-gradient(180deg,#000 0 2px,transparent 2px 4px)"></div>
<div style="position:absolute;left:1648px;top:549px;width:1px;height:17px;background:repeating-linear-gradient(180deg,#000 0 2px,transparent 2px 4px)"></div>
<div style="position:absolute;left:1746px;top:549px;width:1px;height:17px;background:repeating-linear-gradient(180deg,#000 0 2px,transparent 2px 4px)"></div>
<div style="position:absolute;left:1844px;top:549px;width:1px;height:17px;background:repeating-linear-gradient(180deg,#000 0 2px,transparent 2px 4px)"></div>
<span class="t" style="left:1050.00px;top:551px;font-size:12px;line-height:12px;font-weight:400;color:#000;">-</span>
<span class="t" style="left:1148.00px;top:551px;font-size:12px;line-height:12px;font-weight:400;color:#000;">-</span>
<span class="t" style="left:1246.00px;top:551px;font-size:12px;line-height:12px;font-weight:400;color:#000;">-</span>
<span class="t" style="left:1334.64px;top:551px;font-size:12px;line-height:12px;font-weight:400;color:#000;">17</span>
<span class="t" style="left:1432.64px;top:551px;font-size:12px;line-height:12px;font-weight:400;color:#000;">35</span>
<span class="t" style="left:1530.64px;top:551px;font-size:12px;line-height:12px;font-weight:400;color:#000;">52</span>
<span class="t" style="left:1628.64px;top:551px;font-size:12px;line-height:12px;font-weight:400;color:#000;">69</span>
<span class="t" style="left:1726.64px;top:551px;font-size:12px;line-height:12px;font-weight:400;color:#000;">87</span>
<span class="t" style="left:1817.97px;top:551px;font-size:12px;line-height:12px;font-weight:400;color:#000;">104</span>
<div style="position:absolute;left:1915.97px;top:549px;width:0.00px;height:20px;overflow:hidden"><span class="t" style="left:0;top:2px;font-size:12px;line-height:12px;font-weight:400;color:#000;">122</span></div>
<div style="position:absolute;left:962px;top:619px;width:932px;height:1px;background:repeating-linear-gradient(90deg,#000 0 1px,transparent 1px 2px)"></div>
<div style="position:absolute;left:962px;top:637px;width:932px;height:1px;background:repeating-linear-gradient(90deg,#000 0 1px,transparent 1px 2px)"></div>
<div style="position:absolute;left:962px;top:619px;width:1px;height:18px;background:repeating-linear-gradient(180deg,#000 0 1px,transparent 1px 2px)"></div>
<div style="position:absolute;left:1060px;top:619px;width:1px;height:18px;background:repeating-linear-gradient(180deg,#000 0 1px,transparent 1px 2px)"></div>
<div style="position:absolute;left:1158px;top:619px;width:1px;height:18px;background:repeating-linear-gradient(180deg,#000 0 1px,transparent 1px 2px)"></div>
<div style="position:absolute;left:1256px;top:619px;width:1px;height:18px;background:repeating-linear-gradient(180deg,#000 0 1px,transparent 1px 2px)"></div>
<div style="position:absolute;left:1354px;top:619px;width:1px;height:18px;background:repeating-linear-gradient(180deg,#000 0 1px,transparent 1px 2px)"></div>
<div style="position:absolute;left:1452px;top:619px;width:1px;height:18px;background:repeating-linear-gradient(180deg,#000 0 1px,transparent 1px 2px)"></div>
<div style="position:absolute;left:1550px;top:619px;width:1px;height:18px;background:repeating-linear-gradient(180deg,#000 0 1px,transparent 1px 2px)"></div>
<div style="position:absolute;left:1648px;top:619px;width:1px;height:18px;background:repeating-linear-gradient(180deg,#000 0 1px,transparent 1px 2px)"></div>
<div style="position:absolute;left:1746px;top:619px;width:1px;height:18px;background:repeating-linear-gradient(180deg,#000 0 1px,transparent 1px 2px)"></div>
<div style="position:absolute;left:1844px;top:619px;width:1px;height:18px;background:repeating-linear-gradient(180deg,#000 0 1px,transparent 1px 2px)"></div>
<div style="position:absolute;left:962px;top:655px;width:932px;height:1px;background:repeating-linear-gradient(90deg,#000 0 1px,transparent 1px 2px)"></div>
<div style="position:absolute;left:962px;top:673px;width:932px;height:1px;background:repeating-linear-gradient(90deg,#000 0 1px,transparent 1px 2px)"></div>
<div style="position:absolute;left:962px;top:691px;width:932px;height:1px;background:repeating-linear-gradient(90deg,#000 0 1px,transparent 1px 2px)"></div>
<div style="position:absolute;left:962px;top:709px;width:932px;height:1px;background:repeating-linear-gradient(90deg,#000 0 1px,transparent 1px 2px)"></div>
<div style="position:absolute;left:962px;top:727px;width:932px;height:1px;background:repeating-linear-gradient(90deg,#000 0 1px,transparent 1px 2px)"></div>
<div style="position:absolute;left:962px;top:745px;width:932px;height:1px;background:repeating-linear-gradient(90deg,#000 0 1px,transparent 1px 2px)"></div>
<div style="position:absolute;left:962px;top:763px;width:932px;height:1px;background:repeating-linear-gradient(90deg,#000 0 1px,transparent 1px 2px)"></div>
<div style="position:absolute;left:962px;top:781px;width:932px;height:1px;background:repeating-linear-gradient(90deg,#000 0 1px,transparent 1px 2px)"></div>
<div style="position:absolute;left:962px;top:655px;width:1px;height:126px;background:repeating-linear-gradient(180deg,#000 0 1px,transparent 1px 2px)"></div>
<div style="position:absolute;left:1060px;top:655px;width:1px;height:126px;background:repeating-linear-gradient(180deg,#000 0 1px,transparent 1px 2px)"></div>
<div style="position:absolute;left:1158px;top:655px;width:1px;height:126px;background:repeating-linear-gradient(180deg,#000 0 1px,transparent 1px 2px)"></div>
<div style="position:absolute;left:1256px;top:655px;width:1px;height:126px;background:repeating-linear-gradient(180deg,#000 0 1px,transparent 1px 2px)"></div>
<div style="position:absolute;left:1354px;top:655px;width:1px;height:126px;background:repeating-linear-gradient(180deg,#000 0 1px,transparent 1px 2px)"></div>
<div style="position:absolute;left:1452px;top:655px;width:1px;height:126px;background:repeating-linear-gradient(180deg,#000 0 1px,transparent 1px 2px)"></div>
<div style="position:absolute;left:1550px;top:655px;width:1px;height:126px;background:repeating-linear-gradient(180deg,#000 0 1px,transparent 1px 2px)"></div>
<div style="position:absolute;left:1648px;top:655px;width:1px;height:126px;background:repeating-linear-gradient(180deg,#000 0 1px,transparent 1px 2px)"></div>
<div style="position:absolute;left:1746px;top:655px;width:1px;height:126px;background:repeating-linear-gradient(180deg,#000 0 1px,transparent 1px 2px)"></div>
<div style="position:absolute;left:1844px;top:655px;width:1px;height:126px;background:repeating-linear-gradient(180deg,#000 0 1px,transparent 1px 2px)"></div>
<div style="position:absolute;left:962px;top:799px;width:932px;height:1px;background:repeating-linear-gradient(90deg,#000 0 1px,transparent 1px 2px)"></div>
<div style="position:absolute;left:962px;top:817px;width:932px;height:1px;background:repeating-linear-gradient(90deg,#000 0 1px,transparent 1px 2px)"></div>
<div style="position:absolute;left:962px;top:799px;width:1px;height:18px;background:repeating-linear-gradient(180deg,#000 0 1px,transparent 1px 2px)"></div>
<div style="position:absolute;left:1060px;top:799px;width:1px;height:18px;background:repeating-linear-gradient(180deg,#000 0 1px,transparent 1px 2px)"></div>
<div style="position:absolute;left:1158px;top:799px;width:1px;height:18px;background:repeating-linear-gradient(180deg,#000 0 1px,transparent 1px 2px)"></div>
<div style="position:absolute;left:1256px;top:799px;width:1px;height:18px;background:repeating-linear-gradient(180deg,#000 0 1px,transparent 1px 2px)"></div>
<div style="position:absolute;left:1354px;top:799px;width:1px;height:18px;background:repeating-linear-gradient(180deg,#000 0 1px,transparent 1px 2px)"></div>
<div style="position:absolute;left:1452px;top:799px;width:1px;height:18px;background:repeating-linear-gradient(180deg,#000 0 1px,transparent 1px 2px)"></div>
<div style="position:absolute;left:1550px;top:799px;width:1px;height:18px;background:repeating-linear-gradient(180deg,#000 0 1px,transparent 1px 2px)"></div>
<div style="position:absolute;left:1648px;top:799px;width:1px;height:18px;background:repeating-linear-gradient(180deg,#000 0 1px,transparent 1px 2px)"></div>
<div style="position:absolute;left:1746px;top:799px;width:1px;height:18px;background:repeating-linear-gradient(180deg,#000 0 1px,transparent 1px 2px)"></div>
<div style="position:absolute;left:1844px;top:799px;width:1px;height:18px;background:repeating-linear-gradient(180deg,#000 0 1px,transparent 1px 2px)"></div>
<span class="t" style="left:1026.40px;top:623px;font-size:12.6px;line-height:12.6px;font-weight:400;color:#000;transform:scaleX(0.8922);transform-origin:0 0;">TRUE</span>
<div style="position:absolute;left:963px;top:620px;width:0;height:0;border-top:6px solid #0c7b0c;border-right:6px solid transparent"></div>
<span class="t" style="left:1124.40px;top:623px;font-size:12.6px;line-height:12.6px;font-weight:400;color:#000;transform:scaleX(0.8922);transform-origin:0 0;">TRUE</span>
<div style="position:absolute;left:1061px;top:620px;width:0;height:0;border-top:6px solid #0c7b0c;border-right:6px solid transparent"></div>
<span class="t" style="left:1222.40px;top:623px;font-size:12.6px;line-height:12.6px;font-weight:400;color:#000;transform:scaleX(0.8922);transform-origin:0 0;">TRUE</span>
<div style="position:absolute;left:1159px;top:620px;width:0;height:0;border-top:6px solid #0c7b0c;border-right:6px solid transparent"></div>
<span class="t" style="left:1320.40px;top:623px;font-size:12.6px;line-height:12.6px;font-weight:400;color:#000;transform:scaleX(0.8922);transform-origin:0 0;">TRUE</span>
<div style="position:absolute;left:1257px;top:620px;width:0;height:0;border-top:6px solid #0c7b0c;border-right:6px solid transparent"></div>
<span class="t" style="left:1418.40px;top:623px;font-size:12.6px;line-height:12.6px;font-weight:400;color:#000;transform:scaleX(0.8922);transform-origin:0 0;">TRUE</span>
<div style="position:absolute;left:1355px;top:620px;width:0;height:0;border-top:6px solid #0c7b0c;border-right:6px solid transparent"></div>
<span class="t" style="left:1516.40px;top:623px;font-size:12.6px;line-height:12.6px;font-weight:400;color:#000;transform:scaleX(0.8922);transform-origin:0 0;">TRUE</span>
<div style="position:absolute;left:1453px;top:620px;width:0;height:0;border-top:6px solid #0c7b0c;border-right:6px solid transparent"></div>
<span class="t" style="left:1614.40px;top:623px;font-size:12.6px;line-height:12.6px;font-weight:400;color:#000;transform:scaleX(0.8922);transform-origin:0 0;">TRUE</span>
<div style="position:absolute;left:1551px;top:620px;width:0;height:0;border-top:6px solid #0c7b0c;border-right:6px solid transparent"></div>
<span class="t" style="left:1712.40px;top:623px;font-size:12.6px;line-height:12.6px;font-weight:400;color:#000;transform:scaleX(0.8922);transform-origin:0 0;">TRUE</span>
<div style="position:absolute;left:1649px;top:620px;width:0;height:0;border-top:6px solid #0c7b0c;border-right:6px solid transparent"></div>
<span class="t" style="left:1810.40px;top:623px;font-size:12.6px;line-height:12.6px;font-weight:400;color:#000;transform:scaleX(0.8922);transform-origin:0 0;">TRUE</span>
<div style="position:absolute;left:1747px;top:620px;width:0;height:0;border-top:6px solid #0c7b0c;border-right:6px solid transparent"></div>
<div style="position:absolute;left:1908.40px;top:621px;width:0.00px;height:20px;overflow:hidden"><span class="t" style="left:0;top:2px;font-size:12.6px;line-height:12.6px;font-weight:400;color:#000;">TRUE</span></div>
<div style="position:absolute;left:1845px;top:620px;width:0;height:0;border-top:6px solid #0c7b0c;border-right:6px solid transparent"></div>
<span class="t" style="left:1025.48px;top:659px;font-size:12.6px;line-height:12.6px;font-weight:400;color:#000;">72.67</span>
<div style="position:absolute;left:963px;top:656px;width:0;height:0;border-top:6px solid #0c7b0c;border-right:6px solid transparent"></div>
<span class="t" style="left:1123.48px;top:659px;font-size:12.6px;line-height:12.6px;font-weight:400;color:#000;">74.85</span>
<div style="position:absolute;left:1061px;top:656px;width:0;height:0;border-top:6px solid #0c7b0c;border-right:6px solid transparent"></div>
<span class="t" style="left:1221.48px;top:659px;font-size:12.6px;line-height:12.6px;font-weight:400;color:#000;">77.10</span>
<div style="position:absolute;left:1159px;top:656px;width:0;height:0;border-top:6px solid #0c7b0c;border-right:6px solid transparent"></div>
<span class="t" style="left:1319.48px;top:659px;font-size:12.6px;line-height:12.6px;font-weight:400;color:#000;">79.41</span>
<div style="position:absolute;left:1257px;top:656px;width:0;height:0;border-top:6px solid #0c7b0c;border-right:6px solid transparent"></div>
<span class="t" style="left:1417.48px;top:659px;font-size:12.6px;line-height:12.6px;font-weight:400;color:#000;">81.80</span>
<div style="position:absolute;left:1355px;top:656px;width:0;height:0;border-top:6px solid #0c7b0c;border-right:6px solid transparent"></div>
<span class="t" style="left:1515.48px;top:659px;font-size:12.6px;line-height:12.6px;font-weight:400;color:#000;">84.25</span>
<div style="position:absolute;left:1453px;top:656px;width:0;height:0;border-top:6px solid #0c7b0c;border-right:6px solid transparent"></div>
<span class="t" style="left:1613.48px;top:659px;font-size:12.6px;line-height:12.6px;font-weight:400;color:#000;">86.78</span>
<div style="position:absolute;left:1551px;top:656px;width:0;height:0;border-top:6px solid #0c7b0c;border-right:6px solid transparent"></div>
<span class="t" style="left:1711.48px;top:659px;font-size:12.6px;line-height:12.6px;font-weight:400;color:#000;">89.38</span>
<div style="position:absolute;left:1649px;top:656px;width:0;height:0;border-top:6px solid #0c7b0c;border-right:6px solid transparent"></div>
<span class="t" style="left:1809.48px;top:659px;font-size:12.6px;line-height:12.6px;font-weight:400;color:#000;">92.06</span>
<div style="position:absolute;left:1747px;top:656px;width:0;height:0;border-top:6px solid #0c7b0c;border-right:6px solid transparent"></div>
<div style="position:absolute;left:1907.48px;top:657px;width:0.00px;height:20px;overflow:hidden"><span class="t" style="left:0;top:2px;font-size:12.6px;line-height:12.6px;font-weight:400;color:#000;">94.82</span></div>
<div style="position:absolute;left:1845px;top:656px;width:0;height:0;border-top:6px solid #0c7b0c;border-right:6px solid transparent"></div>
<span class="t" style="left:1025.48px;top:677px;font-size:12.6px;line-height:12.6px;font-weight:400;color:#000;">17.34</span>
<div style="position:absolute;left:963px;top:674px;width:0;height:0;border-top:6px solid #0c7b0c;border-right:6px solid transparent"></div>
<span class="t" style="left:1123.48px;top:677px;font-size:12.6px;line-height:12.6px;font-weight:400;color:#000;">17.34</span>
<div style="position:absolute;left:1061px;top:674px;width:0;height:0;border-top:6px solid #0c7b0c;border-right:6px solid transparent"></div>
<span class="t" style="left:1221.48px;top:677px;font-size:12.6px;line-height:12.6px;font-weight:400;color:#000;">17.34</span>
<div style="position:absolute;left:1159px;top:674px;width:0;height:0;border-top:6px solid #0c7b0c;border-right:6px solid transparent"></div>
<span class="t" style="left:1319.48px;top:677px;font-size:12.6px;line-height:12.6px;font-weight:400;color:#000;">17.39</span>
<div style="position:absolute;left:1257px;top:674px;width:0;height:0;border-top:6px solid #0c7b0c;border-right:6px solid transparent"></div>
<span class="t" style="left:1417.48px;top:677px;font-size:12.6px;line-height:12.6px;font-weight:400;color:#000;">17.34</span>
<div style="position:absolute;left:1355px;top:674px;width:0;height:0;border-top:6px solid #0c7b0c;border-right:6px solid transparent"></div>
<span class="t" style="left:1515.48px;top:677px;font-size:12.6px;line-height:12.6px;font-weight:400;color:#000;">17.34</span>
<div style="position:absolute;left:1453px;top:674px;width:0;height:0;border-top:6px solid #0c7b0c;border-right:6px solid transparent"></div>
<span class="t" style="left:1613.48px;top:677px;font-size:12.6px;line-height:12.6px;font-weight:400;color:#000;">17.34</span>
<div style="position:absolute;left:1551px;top:674px;width:0;height:0;border-top:6px solid #0c7b0c;border-right:6px solid transparent"></div>
<span class="t" style="left:1711.48px;top:677px;font-size:12.6px;line-height:12.6px;font-weight:400;color:#000;">17.39</span>
<div style="position:absolute;left:1649px;top:674px;width:0;height:0;border-top:6px solid #0c7b0c;border-right:6px solid transparent"></div>
<span class="t" style="left:1809.48px;top:677px;font-size:12.6px;line-height:12.6px;font-weight:400;color:#000;">17.34</span>
<div style="position:absolute;left:1747px;top:674px;width:0;height:0;border-top:6px solid #0c7b0c;border-right:6px solid transparent"></div>
<div style="position:absolute;left:1907.48px;top:675px;width:0.00px;height:20px;overflow:hidden"><span class="t" style="left:0;top:2px;font-size:12.6px;line-height:12.6px;font-weight:400;color:#000;">17.34</span></div>
<div style="position:absolute;left:1845px;top:674px;width:0;height:0;border-top:6px solid #0c7b0c;border-right:6px solid transparent"></div>
<span class="t" style="left:1032.48px;top:695px;font-size:12.6px;line-height:12.6px;font-weight:400;color:#000;">0.00</span>
<div style="position:absolute;left:963px;top:692px;width:0;height:0;border-top:6px solid #0c7b0c;border-right:6px solid transparent"></div>
<span class="t" style="left:1130.48px;top:695px;font-size:12.6px;line-height:12.6px;font-weight:400;color:#000;">0.00</span>
<div style="position:absolute;left:1061px;top:692px;width:0;height:0;border-top:6px solid #0c7b0c;border-right:6px solid transparent"></div>
<span class="t" style="left:1228.48px;top:695px;font-size:12.6px;line-height:12.6px;font-weight:400;color:#000;">0.00</span>
<div style="position:absolute;left:1159px;top:692px;width:0;height:0;border-top:6px solid #0c7b0c;border-right:6px solid transparent"></div>
<span class="t" style="left:1301.97px;top:695px;font-size:12.6px;line-height:12.6px;font-weight:400;color:#000;">1,380.60</span>
<div style="position:absolute;left:1257px;top:692px;width:0;height:0;border-top:6px solid #0c7b0c;border-right:6px solid transparent"></div>
<span class="t" style="left:1399.97px;top:695px;font-size:12.6px;line-height:12.6px;font-weight:400;color:#000;">1,418.13</span>
<div style="position:absolute;left:1355px;top:692px;width:0;height:0;border-top:6px solid #0c7b0c;border-right:6px solid transparent"></div>
<span class="t" style="left:1497.97px;top:695px;font-size:12.6px;line-height:12.6px;font-weight:400;color:#000;">1,460.68</span>
<div style="position:absolute;left:1453px;top:692px;width:0;height:0;border-top:6px solid #0c7b0c;border-right:6px solid transparent"></div>
<span class="t" style="left:1595.97px;top:695px;font-size:12.6px;line-height:12.6px;font-weight:400;color:#000;">1,504.50</span>
<div style="position:absolute;left:1551px;top:692px;width:0;height:0;border-top:6px solid #0c7b0c;border-right:6px solid transparent"></div>
<span class="t" style="left:1693.97px;top:695px;font-size:12.6px;line-height:12.6px;font-weight:400;color:#000;">1,553.88</span>
<div style="position:absolute;left:1649px;top:692px;width:0;height:0;border-top:6px solid #0c7b0c;border-right:6px solid transparent"></div>
<span class="t" style="left:1791.97px;top:695px;font-size:12.6px;line-height:12.6px;font-weight:400;color:#000;">1,596.12</span>
<div style="position:absolute;left:1747px;top:692px;width:0;height:0;border-top:6px solid #0c7b0c;border-right:6px solid transparent"></div>
<div style="position:absolute;left:1889.97px;top:693px;width:4.03px;height:20px;overflow:hidden"><span class="t" style="left:0;top:2px;font-size:12.6px;line-height:12.6px;font-weight:400;color:#000;">1,640.23</span></div>
<div style="position:absolute;left:1845px;top:692px;width:0;height:0;border-top:6px solid #0c7b0c;border-right:6px solid transparent"></div>
<span class="t" style="left:1032.48px;top:713px;font-size:12.6px;line-height:12.6px;font-weight:400;color:#000;">0.00</span>
<div style="position:absolute;left:963px;top:710px;width:0;height:0;border-top:6px solid #0c7b0c;border-right:6px solid transparent"></div>
<span class="t" style="left:1130.48px;top:713px;font-size:12.6px;line-height:12.6px;font-weight:400;color:#000;">0.00</span>
<div style="position:absolute;left:1061px;top:710px;width:0;height:0;border-top:6px solid #0c7b0c;border-right:6px solid transparent"></div>
<span class="t" style="left:1228.48px;top:713px;font-size:12.6px;line-height:12.6px;font-weight:400;color:#000;">0.00</span>
<div style="position:absolute;left:1159px;top:710px;width:0;height:0;border-top:6px solid #0c7b0c;border-right:6px solid transparent"></div>
<span class="t" style="left:1326.48px;top:713px;font-size:12.6px;line-height:12.6px;font-weight:400;color:#000;">0.00</span>
<div style="position:absolute;left:1257px;top:710px;width:0;height:0;border-top:6px solid #0c7b0c;border-right:6px solid transparent"></div>
<span class="t" style="left:1410.47px;top:713px;font-size:12.6px;line-height:12.6px;font-weight:400;color:#000;">780.19</span>
<div style="position:absolute;left:1355px;top:710px;width:0;height:0;border-top:6px solid #0c7b0c;border-right:6px solid transparent"></div>
<span class="t" style="left:1508.47px;top:713px;font-size:12.6px;line-height:12.6px;font-weight:400;color:#000;">866.88</span>
<div style="position:absolute;left:1453px;top:710px;width:0;height:0;border-top:6px solid #0c7b0c;border-right:6px solid transparent"></div>
<span class="t" style="left:1595.97px;top:713px;font-size:12.6px;line-height:12.6px;font-weight:400;color:#000;">1,387.00</span>
<div style="position:absolute;left:1551px;top:710px;width:0;height:0;border-top:6px solid #0c7b0c;border-right:6px solid transparent"></div>
<span class="t" style="left:1718.48px;top:713px;font-size:12.6px;line-height:12.6px;font-weight:400;color:#000;">0.00</span>
<div style="position:absolute;left:1649px;top:710px;width:0;height:0;border-top:6px solid #0c7b0c;border-right:6px solid transparent"></div>
<span class="t" style="left:1816.48px;top:713px;font-size:12.6px;line-height:12.6px;font-weight:400;color:#000;">0.00</span>
<div style="position:absolute;left:1747px;top:710px;width:0;height:0;border-top:6px solid #0c7b0c;border-right:6px solid transparent"></div>
<div style="position:absolute;left:1914.48px;top:711px;width:0.00px;height:20px;overflow:hidden"><span class="t" style="left:0;top:2px;font-size:12.6px;line-height:12.6px;font-weight:400;color:#000;">0.00</span></div>
<div style="position:absolute;left:1845px;top:710px;width:0;height:0;border-top:6px solid #0c7b0c;border-right:6px solid transparent"></div>
<span class="t" style="left:1032.48px;top:731px;font-size:12.6px;line-height:12.6px;font-weight:400;color:#000;">0.00</span>
<div style="position:absolute;left:963px;top:728px;width:0;height:0;border-top:6px solid #0c7b0c;border-right:6px solid transparent"></div>
<span class="t" style="left:1130.48px;top:731px;font-size:12.6px;line-height:12.6px;font-weight:400;color:#000;">0.00</span>
<div style="position:absolute;left:1061px;top:728px;width:0;height:0;border-top:6px solid #0c7b0c;border-right:6px solid transparent"></div>
<span class="t" style="left:1228.48px;top:731px;font-size:12.6px;line-height:12.6px;font-weight:400;color:#000;">0.00</span>
<div style="position:absolute;left:1159px;top:728px;width:0;height:0;border-top:6px solid #0c7b0c;border-right:6px solid transparent"></div>
<span class="t" style="left:1308.28px;top:731px;font-size:12.6px;line-height:12.6px;font-weight:400;color:#000;">-322.95</span>
<div style="position:absolute;left:1257px;top:728px;width:0;height:0;border-top:6px solid #0c7b0c;border-right:6px solid transparent"></div>
<span class="t" style="left:1406.28px;top:731px;font-size:12.6px;line-height:12.6px;font-weight:400;color:#000;">-329.13</span>
<div style="position:absolute;left:1355px;top:728px;width:0;height:0;border-top:6px solid #0c7b0c;border-right:6px solid transparent"></div>
<span class="t" style="left:1504.28px;top:731px;font-size:12.6px;line-height:12.6px;font-weight:400;color:#000;">-336.40</span>
<div style="position:absolute;left:1453px;top:728px;width:0;height:0;border-top:6px solid #0c7b0c;border-right:6px solid transparent"></div>
<span class="t" style="left:1602.28px;top:731px;font-size:12.6px;line-height:12.6px;font-weight:400;color:#000;">-343.89</span>
<div style="position:absolute;left:1551px;top:728px;width:0;height:0;border-top:6px solid #0c7b0c;border-right:6px solid transparent"></div>
<span class="t" style="left:1700.28px;top:731px;font-size:12.6px;line-height:12.6px;font-weight:400;color:#000;">-352.57</span>
<div style="position:absolute;left:1649px;top:728px;width:0;height:0;border-top:6px solid #0c7b0c;border-right:6px solid transparent"></div>
<span class="t" style="left:1798.28px;top:731px;font-size:12.6px;line-height:12.6px;font-weight:400;color:#000;">-359.56</span>
<div style="position:absolute;left:1747px;top:728px;width:0;height:0;border-top:6px solid #0c7b0c;border-right:6px solid transparent"></div>
<div style="position:absolute;left:1896.28px;top:729px;width:0.00px;height:20px;overflow:hidden"><span class="t" style="left:0;top:2px;font-size:12.6px;line-height:12.6px;font-weight:400;color:#000;">-366.80</span></div>
<div style="position:absolute;left:1845px;top:728px;width:0;height:0;border-top:6px solid #0c7b0c;border-right:6px solid transparent"></div>
<span class="t" style="left:1021.28px;top:749px;font-size:12.6px;line-height:12.6px;font-weight:400;color:#000;">-90.75</span>
<div style="position:absolute;left:963px;top:746px;width:0;height:0;border-top:6px solid #0c7b0c;border-right:6px solid transparent"></div>
<span class="t" style="left:1112.28px;top:749px;font-size:12.6px;line-height:12.6px;font-weight:400;color:#000;">-308.55</span>
<div style="position:absolute;left:1061px;top:746px;width:0;height:0;border-top:6px solid #0c7b0c;border-right:6px solid transparent"></div>
<span class="t" style="left:1210.28px;top:749px;font-size:12.6px;line-height:12.6px;font-weight:400;color:#000;">-508.20</span>
<div style="position:absolute;left:1159px;top:746px;width:0;height:0;border-top:6px solid #0c7b0c;border-right:6px solid transparent"></div>
<span class="t" style="left:1326.48px;top:749px;font-size:12.6px;line-height:12.6px;font-weight:400;color:#000;">0.00</span>
<div style="position:absolute;left:1257px;top:746px;width:0;height:0;border-top:6px solid #0c7b0c;border-right:6px solid transparent"></div>
<span class="t" style="left:1424.48px;top:749px;font-size:12.6px;line-height:12.6px;font-weight:400;color:#000;">0.00</span>
<div style="position:absolute;left:1355px;top:746px;width:0;height:0;border-top:6px solid #0c7b0c;border-right:6px solid transparent"></div>
<span class="t" style="left:1522.48px;top:749px;font-size:12.6px;line-height:12.6px;font-weight:400;color:#000;">0.00</span>
<div style="position:absolute;left:1453px;top:746px;width:0;height:0;border-top:6px solid #0c7b0c;border-right:6px solid transparent"></div>
<span class="t" style="left:1620.48px;top:749px;font-size:12.6px;line-height:12.6px;font-weight:400;color:#000;">0.00</span>
<div style="position:absolute;left:1551px;top:746px;width:0;height:0;border-top:6px solid #0c7b0c;border-right:6px solid transparent"></div>
<span class="t" style="left:1718.48px;top:749px;font-size:12.6px;line-height:12.6px;font-weight:400;color:#000;">0.00</span>
<div style="position:absolute;left:1649px;top:746px;width:0;height:0;border-top:6px solid #0c7b0c;border-right:6px solid transparent"></div>
<span class="t" style="left:1816.48px;top:749px;font-size:12.6px;line-height:12.6px;font-weight:400;color:#000;">0.00</span>
<div style="position:absolute;left:1747px;top:746px;width:0;height:0;border-top:6px solid #0c7b0c;border-right:6px solid transparent"></div>
<div style="position:absolute;left:1914.48px;top:747px;width:0.00px;height:20px;overflow:hidden"><span class="t" style="left:0;top:2px;font-size:12.6px;line-height:12.6px;font-weight:400;color:#000;">0.00</span></div>
<div style="position:absolute;left:1845px;top:746px;width:0;height:0;border-top:6px solid #0c7b0c;border-right:6px solid transparent"></div>
<span class="t" style="left:1032.48px;top:767px;font-size:12.6px;line-height:12.6px;font-weight:400;color:#000;">0.00</span>
<div style="position:absolute;left:963px;top:764px;width:0;height:0;border-top:6px solid #0c7b0c;border-right:6px solid transparent"></div>
<span class="t" style="left:1130.48px;top:767px;font-size:12.6px;line-height:12.6px;font-weight:400;color:#000;">0.00</span>
<div style="position:absolute;left:1061px;top:764px;width:0;height:0;border-top:6px solid #0c7b0c;border-right:6px solid transparent"></div>
<span class="t" style="left:1228.48px;top:767px;font-size:12.6px;line-height:12.6px;font-weight:400;color:#000;">0.00</span>
<div style="position:absolute;left:1159px;top:764px;width:0;height:0;border-top:6px solid #0c7b0c;border-right:6px solid transparent"></div>
<span class="t" style="left:1322.28px;top:767px;font-size:12.6px;line-height:12.6px;font-weight:400;color:#000;">-0.50</span>
<div style="position:absolute;left:1257px;top:764px;width:0;height:0;border-top:6px solid #0c7b0c;border-right:6px solid transparent"></div>
<span class="t" style="left:1420.28px;top:767px;font-size:12.6px;line-height:12.6px;font-weight:400;color:#000;">-0.50</span>
<div style="position:absolute;left:1355px;top:764px;width:0;height:0;border-top:6px solid #0c7b0c;border-right:6px solid transparent"></div>
<span class="t" style="left:1518.28px;top:767px;font-size:12.6px;line-height:12.6px;font-weight:400;color:#000;">-0.50</span>
<div style="position:absolute;left:1453px;top:764px;width:0;height:0;border-top:6px solid #0c7b0c;border-right:6px solid transparent"></div>
<span class="t" style="left:1616.28px;top:767px;font-size:12.6px;line-height:12.6px;font-weight:400;color:#000;">-0.50</span>
<div style="position:absolute;left:1551px;top:764px;width:0;height:0;border-top:6px solid #0c7b0c;border-right:6px solid transparent"></div>
<span class="t" style="left:1714.28px;top:767px;font-size:12.6px;line-height:12.6px;font-weight:400;color:#000;">-0.50</span>
<div style="position:absolute;left:1649px;top:764px;width:0;height:0;border-top:6px solid #0c7b0c;border-right:6px solid transparent"></div>
<span class="t" style="left:1812.28px;top:767px;font-size:12.6px;line-height:12.6px;font-weight:400;color:#000;">-0.50</span>
<div style="position:absolute;left:1747px;top:764px;width:0;height:0;border-top:6px solid #0c7b0c;border-right:6px solid transparent"></div>
<div style="position:absolute;left:1910.28px;top:765px;width:0.00px;height:20px;overflow:hidden"><span class="t" style="left:0;top:2px;font-size:12.6px;line-height:12.6px;font-weight:400;color:#000;">-0.50</span></div>
<div style="position:absolute;left:1845px;top:764px;width:0;height:0;border-top:6px solid #0c7b0c;border-right:6px solid transparent"></div>
<span class="t" style="left:1021.28px;top:802px;font-size:12.6px;line-height:12.6px;font-weight:400;color:#000;">-90.75</span>
<div style="position:absolute;left:963px;top:800px;width:0;height:0;border-top:6px solid #0c7b0c;border-right:6px solid transparent"></div>
<span class="t" style="left:1112.28px;top:802px;font-size:12.6px;line-height:12.6px;font-weight:400;color:#000;">-308.55</span>
<div style="position:absolute;left:1061px;top:800px;width:0;height:0;border-top:6px solid #0c7b0c;border-right:6px solid transparent"></div>
<span class="t" style="left:1210.28px;top:802px;font-size:12.6px;line-height:12.6px;font-weight:400;color:#000;">-508.20</span>
<div style="position:absolute;left:1159px;top:800px;width:0;height:0;border-top:6px solid #0c7b0c;border-right:6px solid transparent"></div>
<span class="t" style="left:1301.97px;top:802px;font-size:12.6px;line-height:12.6px;font-weight:400;color:#000;">1,057.15</span>
<div style="position:absolute;left:1257px;top:800px;width:0;height:0;border-top:6px solid #0c7b0c;border-right:6px solid transparent"></div>
<span class="t" style="left:1399.97px;top:802px;font-size:12.6px;line-height:12.6px;font-weight:400;color:#000;">1,868.69</span>
<div style="position:absolute;left:1355px;top:800px;width:0;height:0;border-top:6px solid #0c7b0c;border-right:6px solid transparent"></div>
<span class="t" style="left:1497.97px;top:802px;font-size:12.6px;line-height:12.6px;font-weight:400;color:#000;">1,990.65</span>
<div style="position:absolute;left:1453px;top:800px;width:0;height:0;border-top:6px solid #0c7b0c;border-right:6px solid transparent"></div>
<span class="t" style="left:1596.91px;top:802px;font-size:12.6px;line-height:12.6px;font-weight:400;color:#000;">2,547.11</span>
<div style="position:absolute;left:1551px;top:800px;width:0;height:0;border-top:6px solid #0c7b0c;border-right:6px solid transparent"></div>
<span class="t" style="left:1693.97px;top:802px;font-size:12.6px;line-height:12.6px;font-weight:400;color:#000;">1,200.81</span>
<div style="position:absolute;left:1649px;top:800px;width:0;height:0;border-top:6px solid #0c7b0c;border-right:6px solid transparent"></div>
<span class="t" style="left:1791.97px;top:802px;font-size:12.6px;line-height:12.6px;font-weight:400;color:#000;">1,236.07</span>
<div style="position:absolute;left:1747px;top:800px;width:0;height:0;border-top:6px solid #0c7b0c;border-right:6px solid transparent"></div>
<div style="position:absolute;left:1889.97px;top:800px;width:4.03px;height:20px;overflow:hidden"><span class="t" style="left:0;top:2px;font-size:12.6px;line-height:12.6px;font-weight:400;color:#000;">1,273.00</span></div>
<div style="position:absolute;left:1845px;top:800px;width:0;height:0;border-top:6px solid #0c7b0c;border-right:6px solid transparent"></div>
<div style="position:absolute;left:239px;top:798px;width:646px;height:16px;border:2px solid #000"></div>
<span class="t" style="left:42.50px;top:893px;font-size:12px;line-height:12px;font-weight:400;color:#000;transform:scaleX(0.8955);transform-origin:0 0;">MODEL END</span>
<div style="position:absolute;left:0px;top:0px;width:1921px;height:25px;background:#e6e6e6;"></div>
<div style="position:absolute;left:22px;top:6px;width:26px;height:19px;background:#d2d2d2;"></div>
<div style="position:absolute;left:22px;top:6px;width:1px;height:19px;background:#ababab;"></div>
<div style="position:absolute;left:0px;top:25px;width:1894px;height:1px;background:#a8a8a8;"></div>
<div style="position:absolute;left:7px;top:10px;width:0;height:0;border-left:12px solid transparent;border-bottom:12px solid #c3c3c3"></div>
<div style="position:absolute;left:48px;top:6px;width:1px;height:19px;background:#ababab;"></div>
<div style="position:absolute;left:112px;top:6px;width:1px;height:19px;background:#ababab;"></div>
<div style="position:absolute;left:176px;top:6px;width:1px;height:19px;background:#ababab;"></div>
<div style="position:absolute;left:240px;top:6px;width:1px;height:19px;background:#ababab;"></div>
<div style="position:absolute;left:304px;top:6px;width:1px;height:19px;background:#ababab;"></div>
<div style="position:absolute;left:612px;top:6px;width:1px;height:19px;background:#ababab;"></div>
<div style="position:absolute;left:722px;top:6px;width:1px;height:19px;background:#ababab;"></div>
<div style="position:absolute;left:786px;top:6px;width:1px;height:19px;background:#ababab;"></div>
<div style="position:absolute;left:888px;top:6px;width:1px;height:19px;background:#ababab;"></div>
<div style="position:absolute;left:903px;top:6px;width:1px;height:19px;background:#ababab;"></div>
<div style="position:absolute;left:935px;top:6px;width:1px;height:19px;background:#ababab;"></div>
<div style="position:absolute;left:962px;top:6px;width:1px;height:19px;background:#ababab;"></div>
<div style="position:absolute;left:1060px;top:6px;width:1px;height:19px;background:#ababab;"></div>
<div style="position:absolute;left:1158px;top:6px;width:1px;height:19px;background:#ababab;"></div>
<div style="position:absolute;left:1256px;top:6px;width:1px;height:19px;background:#ababab;"></div>
<div style="position:absolute;left:1354px;top:6px;width:1px;height:19px;background:#ababab;"></div>
<div style="position:absolute;left:1452px;top:6px;width:1px;height:19px;background:#ababab;"></div>
<div style="position:absolute;left:1550px;top:6px;width:1px;height:19px;background:#ababab;"></div>
<div style="position:absolute;left:1648px;top:6px;width:1px;height:19px;background:#ababab;"></div>
<div style="position:absolute;left:1746px;top:6px;width:1px;height:19px;background:#ababab;"></div>
<div style="position:absolute;left:1844px;top:6px;width:1px;height:19px;background:#ababab;"></div>
<span class="t" style="left:31.33px;top:11px;font-size:12.5px;line-height:12.5px;font-weight:400;color:#107c41;">A</span>
<span class="t" style="left:75.83px;top:11px;font-size:12.5px;line-height:12.5px;font-weight:400;color:#222222;">B</span>
<span class="t" style="left:139.48px;top:11px;font-size:12.5px;line-height:12.5px;font-weight:400;color:#222222;">C</span>
<span class="t" style="left:203.48px;top:11px;font-size:12.5px;line-height:12.5px;font-weight:400;color:#222222;">D</span>
<span class="t" style="left:267.83px;top:11px;font-size:12.5px;line-height:12.5px;font-weight:400;color:#222222;">E</span>
<span class="t" style="left:454.18px;top:11px;font-size:12.5px;line-height:12.5px;font-weight:400;color:#222222;">F</span>
<span class="t" style="left:662.13px;top:11px;font-size:12.5px;line-height:12.5px;font-weight:400;color:#222222;">G</span>
<span class="t" style="left:749.48px;top:11px;font-size:12.5px;line-height:12.5px;font-weight:400;color:#222222;">H</span>
<span class="t" style="left:835.26px;top:11px;font-size:12.5px;line-height:12.5px;font-weight:400;color:#222222;">I</span>
<span class="t" style="left:892.38px;top:11px;font-size:12.5px;line-height:12.5px;font-weight:400;color:#222222;">J</span>
<span class="t" style="left:914.83px;top:11px;font-size:12.5px;line-height:12.5px;font-weight:400;color:#222222;">K</span>
<span class="t" style="left:945.02px;top:11px;font-size:12.5px;line-height:12.5px;font-weight:400;color:#222222;">L</span>
<span class="t" style="left:1005.79px;top:11px;font-size:12.5px;line-height:12.5px;font-weight:400;color:#222222;">M</span>
<span class="t" style="left:1104.48px;top:11px;font-size:12.5px;line-height:12.5px;font-weight:400;color:#222222;">N</span>
<span class="t" style="left:1202.13px;top:11px;font-size:12.5px;line-height:12.5px;font-weight:400;color:#222222;">O</span>
<span class="t" style="left:1300.83px;top:11px;font-size:12.5px;line-height:12.5px;font-weight:400;color:#222222;">P</span>
<span class="t" style="left:1398.13px;top:11px;font-size:12.5px;line-height:12.5px;font-weight:400;color:#222222;">Q</span>
<span class="t" style="left:1496.48px;top:11px;font-size:12.5px;line-height:12.5px;font-weight:400;color:#222222;">R</span>
<span class="t" style="left:1594.83px;top:11px;font-size:12.5px;line-height:12.5px;font-weight:400;color:#222222;">S</span>
<span class="t" style="left:1693.18px;top:11px;font-size:12.5px;line-height:12.5px;font-weight:400;color:#222222;">T</span>
<span class="t" style="left:1790.48px;top:11px;font-size:12.5px;line-height:12.5px;font-weight:400;color:#222222;">U</span>
<div style="position:absolute;left:1888.83px;top:9px;width:5.17px;height:20px;overflow:hidden"><span class="t" style="left:0;top:2px;font-size:12.5px;line-height:12.5px;font-weight:400;color:#222222;">V</span></div>
<div style="position:absolute;left:0px;top:25px;width:22px;height:882px;background:#e6e6e6;"></div>
<div style="position:absolute;left:0px;top:26px;width:22px;height:17px;background:#d2d2d2;"></div>
<div style="position:absolute;left:22px;top:25px;width:1px;height:882px;background:#a8a8a8;"></div>
<div style="position:absolute;left:0px;top:43px;width:22px;height:1px;background:#ababab;"></div>
<span class="t" style="left:6.07px;top:27px;font-size:14px;line-height:14px;font-weight:400;color:#107c41;transform:scaleX(0.8800);transform-origin:0 0;">1</span>
<div style="position:absolute;left:0px;top:61px;width:22px;height:1px;background:#ababab;"></div>
<span class="t" style="left:6.07px;top:45px;font-size:14px;line-height:14px;font-weight:400;color:#111111;transform:scaleX(0.8800);transform-origin:0 0;">2</span>
<div style="position:absolute;left:0px;top:79px;width:22px;height:1px;background:#ababab;"></div>
<span class="t" style="left:6.07px;top:63px;font-size:14px;line-height:14px;font-weight:400;color:#111111;transform:scaleX(0.8800);transform-origin:0 0;">3</span>
<div style="position:absolute;left:0px;top:97px;width:22px;height:1px;background:#ababab;"></div>
<span class="t" style="left:6.07px;top:81px;font-size:14px;line-height:14px;font-weight:400;color:#111111;transform:scaleX(0.8800);transform-origin:0 0;">4</span>
<div style="position:absolute;left:0px;top:115px;width:22px;height:1px;background:#ababab;"></div>
<span class="t" style="left:6.07px;top:99px;font-size:14px;line-height:14px;font-weight:400;color:#111111;transform:scaleX(0.8800);transform-origin:0 0;">5</span>
<div style="position:absolute;left:0px;top:133px;width:22px;height:1px;background:#ababab;"></div>
<span class="t" style="left:6.07px;top:117px;font-size:14px;line-height:14px;font-weight:400;color:#111111;transform:scaleX(0.8800);transform-origin:0 0;">6</span>
<div style="position:absolute;left:0px;top:151px;width:22px;height:1px;background:#ababab;"></div>
<span class="t" style="left:6.07px;top:135px;font-size:14px;line-height:14px;font-weight:400;color:#111111;transform:scaleX(0.8800);transform-origin:0 0;">7</span>
<div style="position:absolute;left:0px;top:169px;width:22px;height:1px;background:#ababab;"></div>
<span class="t" style="left:6.07px;top:153px;font-size:14px;line-height:14px;font-weight:400;color:#111111;transform:scaleX(0.8800);transform-origin:0 0;">8</span>
<div style="position:absolute;left:0px;top:187px;width:22px;height:1px;background:#ababab;"></div>
<span class="t" style="left:6.07px;top:171px;font-size:14px;line-height:14px;font-weight:400;color:#111111;transform:scaleX(0.8800);transform-origin:0 0;">9</span>
<div style="position:absolute;left:0px;top:205px;width:22px;height:1px;background:#ababab;"></div>
<span class="t" style="left:2.65px;top:189px;font-size:14px;line-height:14px;font-weight:400;color:#111111;transform:scaleX(0.8800);transform-origin:0 0;">10</span>
<div style="position:absolute;left:0px;top:223px;width:22px;height:1px;background:#ababab;"></div>
<span class="t" style="left:3.10px;top:207px;font-size:14px;line-height:14px;font-weight:400;color:#111111;transform:scaleX(0.8800);transform-origin:0 0;">11</span>
<div style="position:absolute;left:0px;top:241px;width:22px;height:1px;background:#ababab;"></div>
<span class="t" style="left:2.65px;top:225px;font-size:14px;line-height:14px;font-weight:400;color:#111111;transform:scaleX(0.8800);transform-origin:0 0;">12</span>
<div style="position:absolute;left:0px;top:259px;width:22px;height:1px;background:#ababab;"></div>
<span class="t" style="left:2.65px;top:243px;font-size:14px;line-height:14px;font-weight:400;color:#111111;transform:scaleX(0.8800);transform-origin:0 0;">13</span>
<div style="position:absolute;left:0px;top:277px;width:22px;height:1px;background:#ababab;"></div>
<span class="t" style="left:2.65px;top:261px;font-size:14px;line-height:14px;font-weight:400;color:#111111;transform:scaleX(0.8800);transform-origin:0 0;">14</span>
<div style="position:absolute;left:0px;top:295px;width:22px;height:1px;background:#ababab;"></div>
<span class="t" style="left:2.65px;top:279px;font-size:14px;line-height:14px;font-weight:400;color:#111111;transform:scaleX(0.8800);transform-origin:0 0;">15</span>
<div style="position:absolute;left:0px;top:313px;width:22px;height:1px;background:#ababab;"></div>
<span class="t" style="left:2.65px;top:297px;font-size:14px;line-height:14px;font-weight:400;color:#111111;transform:scaleX(0.8800);transform-origin:0 0;">16</span>
<div style="position:absolute;left:0px;top:331px;width:22px;height:1px;background:#ababab;"></div>
<span class="t" style="left:2.65px;top:315px;font-size:14px;line-height:14px;font-weight:400;color:#111111;transform:scaleX(0.8800);transform-origin:0 0;">17</span>
<div style="position:absolute;left:0px;top:349px;width:22px;height:1px;background:#ababab;"></div>
<span class="t" style="left:2.65px;top:333px;font-size:14px;line-height:14px;font-weight:400;color:#111111;transform:scaleX(0.8800);transform-origin:0 0;">18</span>
<div style="position:absolute;left:0px;top:367px;width:22px;height:1px;background:#ababab;"></div>
<span class="t" style="left:2.65px;top:351px;font-size:14px;line-height:14px;font-weight:400;color:#111111;transform:scaleX(0.8800);transform-origin:0 0;">19</span>
<div style="position:absolute;left:0px;top:385px;width:22px;height:1px;background:#ababab;"></div>
<span class="t" style="left:2.65px;top:369px;font-size:14px;line-height:14px;font-weight:400;color:#111111;transform:scaleX(0.8800);transform-origin:0 0;">20</span>
<div style="position:absolute;left:0px;top:403px;width:22px;height:1px;background:#ababab;"></div>
<span class="t" style="left:2.65px;top:387px;font-size:14px;line-height:14px;font-weight:400;color:#111111;transform:scaleX(0.8800);transform-origin:0 0;">21</span>
<div style="position:absolute;left:0px;top:421px;width:22px;height:1px;background:#ababab;"></div>
<span class="t" style="left:2.65px;top:405px;font-size:14px;line-height:14px;font-weight:400;color:#111111;transform:scaleX(0.8800);transform-origin:0 0;">22</span>
<div style="position:absolute;left:0px;top:439px;width:22px;height:1px;background:#ababab;"></div>
<span class="t" style="left:2.65px;top:423px;font-size:14px;line-height:14px;font-weight:400;color:#111111;transform:scaleX(0.8800);transform-origin:0 0;">23</span>
<div style="position:absolute;left:0px;top:457px;width:22px;height:1px;background:#ababab;"></div>
<span class="t" style="left:2.65px;top:441px;font-size:14px;line-height:14px;font-weight:400;color:#111111;transform:scaleX(0.8800);transform-origin:0 0;">24</span>
<div style="position:absolute;left:0px;top:475px;width:22px;height:1px;background:#ababab;"></div>
<span class="t" style="left:2.65px;top:459px;font-size:14px;line-height:14px;font-weight:400;color:#111111;transform:scaleX(0.8800);transform-origin:0 0;">25</span>
<div style="position:absolute;left:0px;top:493px;width:22px;height:1px;background:#ababab;"></div>
<span class="t" style="left:2.65px;top:477px;font-size:14px;line-height:14px;font-weight:400;color:#111111;transform:scaleX(0.8800);transform-origin:0 0;">26</span>
<div style="position:absolute;left:0px;top:511px;width:22px;height:1px;background:#ababab;"></div>
<span class="t" style="left:2.65px;top:495px;font-size:14px;line-height:14px;font-weight:400;color:#111111;transform:scaleX(0.8800);transform-origin:0 0;">27</span>
<div style="position:absolute;left:0px;top:529px;width:22px;height:1px;background:#ababab;"></div>
<span class="t" style="left:2.65px;top:513px;font-size:14px;line-height:14px;font-weight:400;color:#111111;transform:scaleX(0.8800);transform-origin:0 0;">28</span>
<div style="position:absolute;left:0px;top:547px;width:22px;height:1px;background:#ababab;"></div>
<span class="t" style="left:2.65px;top:531px;font-size:14px;line-height:14px;font-weight:400;color:#111111;transform:scaleX(0.8800);transform-origin:0 0;">29</span>
<div style="position:absolute;left:0px;top:565px;width:22px;height:1px;background:#ababab;"></div>
<span class="t" style="left:2.65px;top:549px;font-size:14px;line-height:14px;font-weight:400;color:#111111;transform:scaleX(0.8800);transform-origin:0 0;">30</span>
<div style="position:absolute;left:0px;top:583px;width:22px;height:1px;background:#ababab;"></div>
<span class="t" style="left:2.65px;top:567px;font-size:14px;line-height:14px;font-weight:400;color:#111111;transform:scaleX(0.8800);transform-origin:0 0;">31</span>
<div style="position:absolute;left:0px;top:601px;width:22px;height:1px;background:#ababab;"></div>
<span class="t" style="left:2.65px;top:585px;font-size:14px;line-height:14px;font-weight:400;color:#111111;transform:scaleX(0.8800);transform-origin:0 0;">32</span>
<div style="position:absolute;left:0px;top:619px;width:22px;height:1px;background:#ababab;"></div>
<span class="t" style="left:2.65px;top:603px;font-size:14px;line-height:14px;font-weight:400;color:#111111;transform:scaleX(0.8800);transform-origin:0 0;">33</span>
<div style="position:absolute;left:0px;top:637px;width:22px;height:1px;background:#ababab;"></div>
<span class="t" style="left:2.65px;top:621px;font-size:14px;line-height:14px;font-weight:400;color:#111111;transform:scaleX(0.8800);transform-origin:0 0;">34</span>
<div style="position:absolute;left:0px;top:655px;width:22px;height:1px;background:#ababab;"></div>
<span class="t" style="left:2.65px;top:639px;font-size:14px;line-height:14px;font-weight:400;color:#111111;transform:scaleX(0.8800);transform-origin:0 0;">35</span>
<div style="position:absolute;left:0px;top:673px;width:22px;height:1px;background:#ababab;"></div>
<span class="t" style="left:2.65px;top:657px;font-size:14px;line-height:14px;font-weight:400;color:#111111;transform:scaleX(0.8800);transform-origin:0 0;">36</span>
<div style="position:absolute;left:0px;top:691px;width:22px;height:1px;background:#ababab;"></div>
<span class="t" style="left:2.65px;top:675px;font-size:14px;line-height:14px;font-weight:400;color:#111111;transform:scaleX(0.8800);transform-origin:0 0;">37</span>
<div style="position:absolute;left:0px;top:709px;width:22px;height:1px;background:#ababab;"></div>
<span class="t" style="left:2.65px;top:693px;font-size:14px;line-height:14px;font-weight:400;color:#111111;transform:scaleX(0.8800);transform-origin:0 0;">38</span>
<div style="position:absolute;left:0px;top:727px;width:22px;height:1px;background:#ababab;"></div>
<span class="t" style="left:2.65px;top:711px;font-size:14px;line-height:14px;font-weight:400;color:#111111;transform:scaleX(0.8800);transform-origin:0 0;">39</span>
<div style="position:absolute;left:0px;top:745px;width:22px;height:1px;background:#ababab;"></div>
<span class="t" style="left:2.65px;top:729px;font-size:14px;line-height:14px;font-weight:400;color:#111111;transform:scaleX(0.8800);transform-origin:0 0;">40</span>
<div style="position:absolute;left:0px;top:763px;width:22px;height:1px;background:#ababab;"></div>
<span class="t" style="left:2.65px;top:747px;font-size:14px;line-height:14px;font-weight:400;color:#111111;transform:scaleX(0.8800);transform-origin:0 0;">41</span>
<div style="position:absolute;left:0px;top:781px;width:22px;height:1px;background:#ababab;"></div>
<span class="t" style="left:2.65px;top:765px;font-size:14px;line-height:14px;font-weight:400;color:#111111;transform:scaleX(0.8800);transform-origin:0 0;">42</span>
<div style="position:absolute;left:0px;top:799px;width:22px;height:1px;background:#ababab;"></div>
<span class="t" style="left:2.65px;top:783px;font-size:14px;line-height:14px;font-weight:400;color:#111111;transform:scaleX(0.8800);transform-origin:0 0;">43</span>
<div style="position:absolute;left:0px;top:817px;width:22px;height:1px;background:#ababab;"></div>
<span class="t" style="left:2.65px;top:801px;font-size:14px;line-height:14px;font-weight:400;color:#111111;transform:scaleX(0.8800);transform-origin:0 0;">44</span>
<div style="position:absolute;left:0px;top:835px;width:22px;height:1px;background:#ababab;"></div>
<span class="t" style="left:2.65px;top:819px;font-size:14px;line-height:14px;font-weight:400;color:#111111;transform:scaleX(0.8800);transform-origin:0 0;">45</span>
<div style="position:absolute;left:0px;top:853px;width:22px;height:1px;background:#ababab;"></div>
<span class="t" style="left:2.65px;top:837px;font-size:14px;line-height:14px;font-weight:400;color:#111111;transform:scaleX(0.8800);transform-origin:0 0;">46</span>
<div style="position:absolute;left:0px;top:871px;width:22px;height:1px;background:#ababab;"></div>
<span class="t" style="left:2.65px;top:855px;font-size:14px;line-height:14px;font-weight:400;color:#111111;transform:scaleX(0.8800);transform-origin:0 0;">47</span>
<div style="position:absolute;left:0px;top:889px;width:22px;height:1px;background:#ababab;"></div>
<span class="t" style="left:2.65px;top:873px;font-size:14px;line-height:14px;font-weight:400;color:#111111;transform:scaleX(0.8800);transform-origin:0 0;">48</span>
<div style="position:absolute;left:0px;top:907px;width:22px;height:1px;background:#ababab;"></div>
<span class="t" style="left:2.65px;top:891px;font-size:14px;line-height:14px;font-weight:400;color:#111111;transform:scaleX(0.8800);transform-origin:0 0;">49</span>
<div style="position:absolute;left:21px;top:24px;width:25px;height:17px;border:2px solid #107c41;box-shadow:inset 0 0 0 1px #fff"></div>
<div style="position:absolute;left:46px;top:41px;width:5px;height:5px;background:#107c41;box-shadow:-1px -1px 0 0 #fff"></div>
<div style="position:absolute;left:1894px;top:0px;width:27px;height:906px;background:#e6e6e6;"></div>
<div style="position:absolute;left:1898px;top:27px;width:19px;height:861px;background:#f0f0f0;"></div>
<div style="position:absolute;left:1894px;top:25px;width:1px;height:881px;background:#a0a0a0;"></div>
<div style="position:absolute;left:1898px;top:8px;width:19px;height:19px;background:#ffffff;box-sizing:border-box;border:1px solid #9a9a9a"></div>
<div style="position:absolute;left:1903px;top:14px;width:0;height:0;border-left:4.5px solid transparent;border-right:4.5px solid transparent;border-bottom:5px solid #222"></div>
<div style="position:absolute;left:1898px;top:27px;width:19px;height:645px;background:#ffffff;box-sizing:border-box;border:1px solid #9a9a9a"></div>
<div style="position:absolute;left:1898px;top:888px;width:19px;height:18px;background:#ffffff;box-sizing:border-box;border:1px solid #9a9a9a"></div>
<div style="position:absolute;left:1903px;top:895px;width:0;height:0;border-left:4.5px solid transparent;border-right:4.5px solid transparent;border-top:5px solid #222"></div>
<div style="position:absolute;left:1919px;top:0px;width:1px;height:966px;background:#f2f2f2;"></div>
<div style="position:absolute;left:1920px;top:0px;width:1px;height:966px;background:#000000;"></div>
<div style="position:absolute;left:0px;top:906px;width:1894px;height:1px;background:#a0a0a0;"></div>
<div style="position:absolute;left:0px;top:907px;width:1919px;height:31px;background:#e6e6e6;"></div>
<div style="position:absolute;left:30px;top:917px;width:0;height:0;border-top:5px solid transparent;border-bottom:5px solid transparent;border-right:5px solid #1e6b3a"></div>
<div style="position:absolute;left:62px;top:917px;width:0;height:0;border-top:5px solid transparent;border-bottom:5px solid transparent;border-left:5px solid #1e6b3a"></div>
<div style="position:absolute;left:90px;top:924px;width:2px;height:2px;background:#1e6b3a;"></div>
<div style="position:absolute;left:95px;top:924px;width:2px;height:2px;background:#1e6b3a;"></div>
<div style="position:absolute;left:100px;top:924px;width:2px;height:2px;background:#1e6b3a;"></div>
<div style="position:absolute;left:115px;top:909px;width:127px;height:26px;background:#ffc000;"></div>
<span class="t" style="left:128.60px;top:913px;font-size:16px;line-height:16px;font-weight:400;color:#1b1b1b;transform:scaleX(0.9757);transform-origin:0 0;">DASHBOARD</span>
<div style="position:absolute;left:247px;top:909px;width:135px;height:26px;background:#ffc000;"></div>
<span class="t" style="left:258.80px;top:913px;font-size:16px;line-height:16px;font-weight:400;color:#1b1b1b;transform:scaleX(0.9646);transform-origin:0 0;">GTL CONTROL</span>
<div style="position:absolute;left:387px;top:909px;width:71px;height:26px;background:#ffc000;"></div>
<span class="t" style="left:398.80px;top:913px;font-size:16px;line-height:16px;font-weight:400;color:#1b1b1b;transform:scaleX(0.8881);transform-origin:0 0;">FLAGS</span>
<div style="position:absolute;left:463px;top:909px;width:122px;height:26px;background:#ffc000;"></div>
<span class="t" style="left:474.30px;top:913px;font-size:16px;line-height:16px;font-weight:400;color:#1b1b1b;transform:scaleX(0.9464);transform-origin:0 0;">GTL_INPUTS</span>
<div style="position:absolute;left:590px;top:909px;width:205px;height:26px;background:#ffc000;"></div>
<span class="t" style="left:603.20px;top:913px;font-size:16px;line-height:16px;font-weight:400;color:#1b1b1b;transform:scaleX(0.9699);transform-origin:0 0;">GTL_MODEL SCENARIO</span>
<div style="position:absolute;left:112px;top:910px;width:1px;height:24px;background:#b4b4b4;"></div>
<div style="position:absolute;left:244px;top:910px;width:1px;height:24px;background:#b4b4b4;"></div>
<div style="position:absolute;left:384px;top:910px;width:1px;height:24px;background:#b4b4b4;"></div>
<div style="position:absolute;left:460px;top:910px;width:1px;height:24px;background:#b4b4b4;"></div>
<div style="position:absolute;left:587px;top:910px;width:1px;height:24px;background:#b4b4b4;"></div>
<div style="position:absolute;left:797px;top:910px;width:1px;height:24px;background:#b4b4b4;"></div>
<div style="position:absolute;left:1019px;top:910px;width:1px;height:24px;background:#b4b4b4;"></div>
<div style="position:absolute;left:798px;top:906px;width:221px;height:28px;background:#ffffff;box-sizing:border-box;border-left:1px solid #b8b8b8;border-right:1px solid #b8b8b8;border-top:1px solid #c8c8c8"></div>
<div style="position:absolute;left:801px;top:908px;width:215px;height:24px;background:linear-gradient(180deg,#ffffff 0%,#fffdf6 35%,#fde7ad 100%)"></div>
<div style="position:absolute;left:798px;top:933px;width:221px;height:2px;background:#1e7145;"></div>
<span class="t" style="left:810.30px;top:913px;font-size:16px;line-height:16px;font-weight:700;color:#1e7145;transform:scaleX(1.0141);transform-origin:0 0;">GTL OPERATING MODEL</span>
<div style="position:absolute;left:1021px;top:909px;width:51px;height:26px;background:#ffc000;"></div>
<span class="t" style="left:1033.20px;top:913px;font-size:16px;line-height:16px;font-weight:400;color:#1b1b1b;transform:scaleX(0.8728);transform-origin:0 0;">DEPR</span>
<div style="position:absolute;left:1082px;top:924px;width:2px;height:2px;background:#1e5c30;"></div>
<div style="position:absolute;left:1087px;top:924px;width:2px;height:2px;background:#1e5c30;"></div>
<div style="position:absolute;left:1092px;top:924px;width:2px;height:2px;background:#1e5c30;"></div>
<div style="position:absolute;left:1110px;top:913px;width:20px;height:20px;border:1.2px solid #777;border-radius:50%;box-sizing:border-box"></div>
<div style="position:absolute;left:1115px;top:922px;width:10px;height:1.5px;background:#777;"></div>
<div style="position:absolute;left:1119.3px;top:917.5px;width:1.5px;height:10px;background:#777;"></div>
<div style="position:absolute;left:1150px;top:916px;width:3px;height:3px;background:#b8b8b8;"></div>
<div style="position:absolute;left:1150px;top:921px;width:3px;height:3px;background:#b8b8b8;"></div>
<div style="position:absolute;left:1150px;top:926px;width:3px;height:3px;background:#b8b8b8;"></div>
<div style="position:absolute;left:1170px;top:913px;width:725px;height:19px;background:#f2f2f2;"></div>
<div style="position:absolute;left:1170px;top:913px;width:19px;height:19px;background:#ffffff;box-sizing:border-box;border:1px solid #9a9a9a;border-right:2px solid #8a8a8a"></div>
<div style="position:absolute;left:1175.5px;top:918px;width:0;height:0;border-top:4.5px solid transparent;border-bottom:4.5px solid transparent;border-right:5px solid #222"></div>
<div style="position:absolute;left:1188px;top:913px;width:588px;height:19px;background:#ffffff;box-sizing:border-box;border:1px solid #9a9a9a"></div>
<div style="position:absolute;left:1876px;top:913px;width:19px;height:19px;background:#ffffff;box-sizing:border-box;border:1px solid #9a9a9a"></div>
<div style="position:absolute;left:1884px;top:918px;width:0;height:0;border-top:4.5px solid transparent;border-bottom:4.5px solid transparent;border-left:5px solid #222"></div>
<div style="position:absolute;left:0px;top:938px;width:1919px;height:28px;background:#f3f3f3;"></div>
<div style="position:absolute;left:0px;top:938px;width:1919px;height:1px;background:#c8c8c8;"></div>
<span class="t" style="left:14.40px;top:947px;font-size:12.5px;line-height:12.5px;font-weight:400;color:#222;transform:scaleX(0.9850);transform-origin:0 0;">Ready</span>
<span class="t" style="left:71.50px;top:947px;font-size:12.5px;line-height:12.5px;font-weight:400;color:#222;transform:scaleX(0.9784);transform-origin:0 0;">Calculate</span>
<svg style="position:absolute;left:140px;top:938px" width="80" height="28" viewBox="140 938 80 28"><rect x="151.8" y="945.4" width="12.8" height="13" fill="none" stroke="#585858" stroke-width="1.1"/><rect x="158" y="945" width="7.2" height="3.3" fill="#585858"/><circle cx="153.4" cy="947.4" r="3.2" fill="#585858"/><g fill="#585858"><rect x="157.3" y="950" width="2" height="1"/><rect x="160.4" y="950" width="2" height="1"/><rect x="154.2" y="953" width="2" height="1"/><rect x="157.3" y="953" width="2" height="1"/><rect x="160.4" y="953" width="2" height="1"/><rect x="154.2" y="956" width="2" height="1"/><rect x="157.3" y="956" width="2" height="1"/><rect x="160.4" y="956" width="2" height="1"/></g><path d="M195 945.3 A7.2 7.2 0 0 0 195.6 959.6" fill="none" stroke="#555" stroke-width="1.1" stroke-dasharray="2.6 1.4"/><path d="M196.6 944 V952.2 M194.6 950 L196.6 952.4 L198.6 950" fill="none" stroke="#555" stroke-width="1"/><path d="M199.8 950.5 H204.4 M202.6 948.6 L204.7 950.5 L202.6 952.4" fill="none" stroke="#555" stroke-width="1"/><path d="M198.6 961 L207.8 954.2" stroke="#3a3a3a" stroke-width="2"/><path d="M199 953.4 L207.8 961.4" stroke="#3a3a3a" stroke-width="1.3"/></svg>
<span class="t" style="left:211.00px;top:947px;font-size:12.5px;line-height:12.5px;font-weight:700;color:#222;transform:scaleX(1.0142);transform-origin:0 0;">Accessibility: Investigate</span>
<div style="position:absolute;left:1547px;top:938px;width:50px;height:28px;background:#c8c8c8;"></div>
<svg style="position:absolute;left:1540px;top:938px" width="160" height="28" viewBox="1540 938 160 28"><g fill="none" stroke="#606060" stroke-width="1"><rect x="1564.5" y="944.5" width="15" height="15"/><path d="M1569.5 944.5V959.5M1574.5 944.5V959.5M1564.5 949.5H1579.5M1564.5 954.5H1579.5"/><rect x="1613.5" y="944.5" width="16" height="14"/><rect x="1617.5" y="946.5" width="8" height="10"/><path d="M1619 949.5H1624M1619 951.5H1624M1619 953.5H1624"/><rect x="1663.5" y="944.5" width="16" height="15"/><path d="M1668.5 944.5V953.5M1673.5 944.5V953.5H1663.5"/></g></svg>
<div style="position:absolute;left:1704px;top:951.5px;width:10px;height:1.2px;background:#444;"></div>
<div style="position:absolute;left:1720px;top:951.5px;width:125px;height:1px;background:#666;"></div>
<div style="position:absolute;left:1767px;top:945px;width:6px;height:14px;background:#444;"></div>
<div style="position:absolute;left:1782px;top:948px;width:1px;height:8px;background:#444;"></div>
<div style="position:absolute;left:1851px;top:951.5px;width:10px;height:1.2px;background:#444;"></div>
<div style="position:absolute;left:1855.5px;top:947px;width:1.2px;height:10px;background:#444;"></div>
<div style="position:absolute;left:0px;top:965px;width:1921px;height:1px;background:#c8c8c8;"></div>
<div style="position:absolute;left:41px;top:965px;width:1606px;height:1px;background:#7a7a7a;"></div>
<span class="t" style="left:1877.00px;top:947px;font-size:12.5px;line-height:12.5px;font-weight:400;color:#222;transform:scaleX(0.9588);transform-origin:0 0;">80%</span>
</body></html>
